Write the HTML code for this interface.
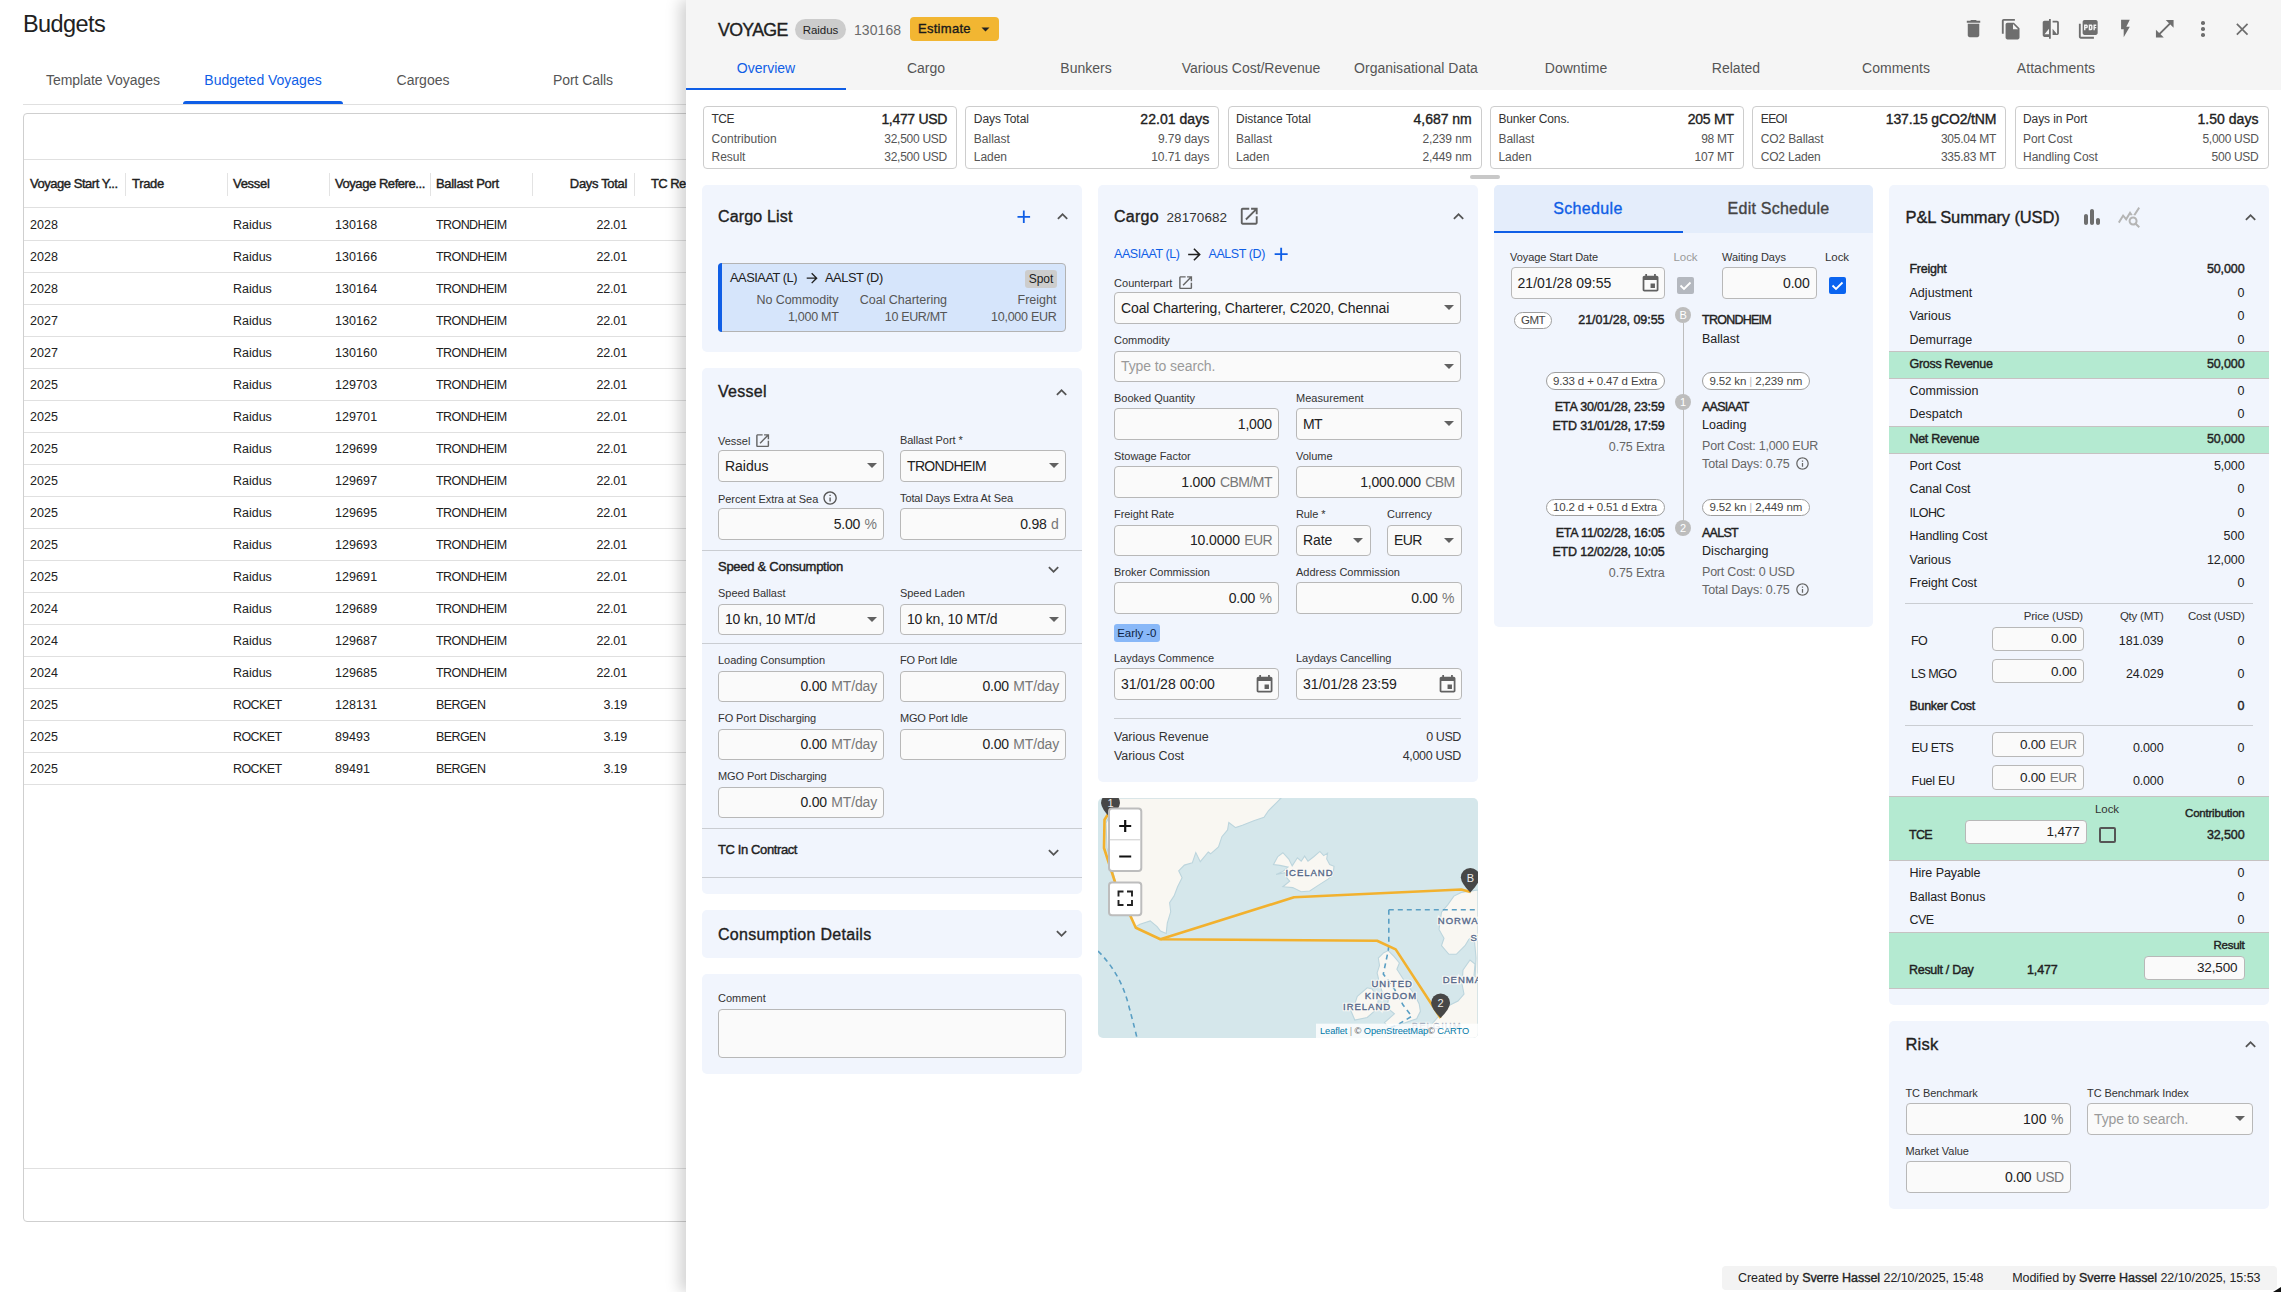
<!DOCTYPE html><html><head><meta charset="utf-8"><style>
*{margin:0;padding:0;box-sizing:border-box}
html,body{width:2281px;height:1292px;overflow:hidden;background:#fff;font-family:"Liberation Sans",sans-serif;position:relative}
.t{position:absolute;white-space:nowrap}
.b{position:absolute}
</style></head><body><div class="t" style="top:7.5px;font-size:23.5px;line-height:33px;color:#212121;letter-spacing:-0.600px;left:23.0px;">Budgets</div>
<div class="t" style="top:70.0px;font-size:14px;line-height:20px;color:#555;letter-spacing:-0.016px;left:-297.0px;width:800px;text-align:center;">Template Voyages</div>
<div class="t" style="top:70.0px;font-size:14px;line-height:20px;color:#0f5ee6;letter-spacing:-0.016px;left:-137.0px;width:800px;text-align:center;">Budgeted Voyages</div>
<div class="t" style="top:70.0px;font-size:14px;line-height:20px;color:#555;letter-spacing:0.004px;left:23.0px;width:800px;text-align:center;">Cargoes</div>
<div class="t" style="top:70.0px;font-size:14px;line-height:20px;color:#555;letter-spacing:-0.092px;left:183.0px;width:800px;text-align:center;">Port Calls</div>
<div class="b" style="left:183.0px;top:101.0px;width:160.0px;height:3.0px;background:#0f5ee6;border-radius:3px 3px 0 0;"></div>
<div class="b" style="left:23.0px;top:104.0px;width:663.0px;height:1.0px;background:#e0e0e0;"></div>
<div class="b" style="left:23.0px;top:113.0px;width:700.0px;height:1109.0px;border:1px solid #cfcfcf;box-sizing:border-box;border-radius:4px;"></div>
<div class="b" style="left:24.0px;top:159.0px;width:662.0px;height:1.0px;background:#e0e0e0;"></div>
<div class="t" style="top:175.0px;font-size:13px;line-height:18px;color:#212121;-webkit-text-stroke:0.4px currentColor;letter-spacing:-0.470px;left:30.0px;">Voyage Start Y...</div>
<div class="t" style="top:175.0px;font-size:13px;line-height:18px;color:#212121;-webkit-text-stroke:0.4px currentColor;letter-spacing:-0.312px;left:132.0px;">Trade</div>
<div class="t" style="top:175.0px;font-size:13px;line-height:18px;color:#212121;-webkit-text-stroke:0.4px currentColor;letter-spacing:-0.293px;left:233.0px;">Vessel</div>
<div class="t" style="top:175.0px;font-size:13px;line-height:18px;color:#212121;-webkit-text-stroke:0.4px currentColor;letter-spacing:-0.439px;left:335.0px;">Voyage Refere...</div>
<div class="t" style="top:175.0px;font-size:13px;line-height:18px;color:#212121;-webkit-text-stroke:0.4px currentColor;letter-spacing:-0.309px;left:436.0px;">Ballast Port</div>
<div class="t" style="top:175.0px;font-size:13px;line-height:18px;color:#212121;-webkit-text-stroke:0.4px currentColor;letter-spacing:-0.332px;right:1654.0px;">Days Total</div>
<div class="t" style="top:175.0px;font-size:13px;line-height:18px;color:#212121;-webkit-text-stroke:0.4px currentColor;letter-spacing:-0.585px;left:651.0px;">TC Re</div>
<div class="b" style="left:125.0px;top:173.0px;width:1.0px;height:23.0px;background:#e3e3e3;"></div>
<div class="b" style="left:227.0px;top:173.0px;width:1.0px;height:23.0px;background:#e3e3e3;"></div>
<div class="b" style="left:329.0px;top:173.0px;width:1.0px;height:23.0px;background:#e3e3e3;"></div>
<div class="b" style="left:430.0px;top:173.0px;width:1.0px;height:23.0px;background:#e3e3e3;"></div>
<div class="b" style="left:532.0px;top:173.0px;width:1.0px;height:23.0px;background:#e3e3e3;"></div>
<div class="b" style="left:634.0px;top:173.0px;width:1.0px;height:23.0px;background:#e3e3e3;"></div>
<div class="b" style="left:24.0px;top:207.0px;width:662.0px;height:1.0px;background:#e0e0e0;"></div>
<div class="t" style="top:216.0px;font-size:12.5px;line-height:18px;color:#212121;letter-spacing:0.075px;left:30.0px;">2028</div>
<div class="t" style="top:216.0px;font-size:12.5px;line-height:18px;color:#212121;letter-spacing:-0.012px;left:233.0px;">Raidus</div>
<div class="t" style="top:216.0px;font-size:12.5px;line-height:18px;color:#212121;letter-spacing:0.075px;left:335.0px;">130168</div>
<div class="t" style="top:216.0px;font-size:12.5px;line-height:18px;color:#212121;letter-spacing:-0.575px;left:436.0px;">TRONDHEIM</div>
<div class="t" style="top:216.0px;font-size:12.5px;line-height:18px;color:#212121;letter-spacing:-0.140px;right:1654.0px;">22.01</div>
<div class="b" style="left:24.0px;top:240.0px;width:662.0px;height:1.0px;background:#e0e0e0;"></div>
<div class="t" style="top:248.0px;font-size:12.5px;line-height:18px;color:#212121;letter-spacing:0.075px;left:30.0px;">2028</div>
<div class="t" style="top:248.0px;font-size:12.5px;line-height:18px;color:#212121;letter-spacing:-0.012px;left:233.0px;">Raidus</div>
<div class="t" style="top:248.0px;font-size:12.5px;line-height:18px;color:#212121;letter-spacing:0.075px;left:335.0px;">130166</div>
<div class="t" style="top:248.0px;font-size:12.5px;line-height:18px;color:#212121;letter-spacing:-0.575px;left:436.0px;">TRONDHEIM</div>
<div class="t" style="top:248.0px;font-size:12.5px;line-height:18px;color:#212121;letter-spacing:-0.140px;right:1654.0px;">22.01</div>
<div class="b" style="left:24.0px;top:272.0px;width:662.0px;height:1.0px;background:#e0e0e0;"></div>
<div class="t" style="top:280.0px;font-size:12.5px;line-height:18px;color:#212121;letter-spacing:0.075px;left:30.0px;">2028</div>
<div class="t" style="top:280.0px;font-size:12.5px;line-height:18px;color:#212121;letter-spacing:-0.012px;left:233.0px;">Raidus</div>
<div class="t" style="top:280.0px;font-size:12.5px;line-height:18px;color:#212121;letter-spacing:0.075px;left:335.0px;">130164</div>
<div class="t" style="top:280.0px;font-size:12.5px;line-height:18px;color:#212121;letter-spacing:-0.575px;left:436.0px;">TRONDHEIM</div>
<div class="t" style="top:280.0px;font-size:12.5px;line-height:18px;color:#212121;letter-spacing:-0.140px;right:1654.0px;">22.01</div>
<div class="b" style="left:24.0px;top:304.0px;width:662.0px;height:1.0px;background:#e0e0e0;"></div>
<div class="t" style="top:312.0px;font-size:12.5px;line-height:18px;color:#212121;letter-spacing:0.075px;left:30.0px;">2027</div>
<div class="t" style="top:312.0px;font-size:12.5px;line-height:18px;color:#212121;letter-spacing:-0.012px;left:233.0px;">Raidus</div>
<div class="t" style="top:312.0px;font-size:12.5px;line-height:18px;color:#212121;letter-spacing:0.075px;left:335.0px;">130162</div>
<div class="t" style="top:312.0px;font-size:12.5px;line-height:18px;color:#212121;letter-spacing:-0.575px;left:436.0px;">TRONDHEIM</div>
<div class="t" style="top:312.0px;font-size:12.5px;line-height:18px;color:#212121;letter-spacing:-0.140px;right:1654.0px;">22.01</div>
<div class="b" style="left:24.0px;top:336.0px;width:662.0px;height:1.0px;background:#e0e0e0;"></div>
<div class="t" style="top:344.0px;font-size:12.5px;line-height:18px;color:#212121;letter-spacing:0.075px;left:30.0px;">2027</div>
<div class="t" style="top:344.0px;font-size:12.5px;line-height:18px;color:#212121;letter-spacing:-0.012px;left:233.0px;">Raidus</div>
<div class="t" style="top:344.0px;font-size:12.5px;line-height:18px;color:#212121;letter-spacing:0.075px;left:335.0px;">130160</div>
<div class="t" style="top:344.0px;font-size:12.5px;line-height:18px;color:#212121;letter-spacing:-0.575px;left:436.0px;">TRONDHEIM</div>
<div class="t" style="top:344.0px;font-size:12.5px;line-height:18px;color:#212121;letter-spacing:-0.140px;right:1654.0px;">22.01</div>
<div class="b" style="left:24.0px;top:368.0px;width:662.0px;height:1.0px;background:#e0e0e0;"></div>
<div class="t" style="top:376.0px;font-size:12.5px;line-height:18px;color:#212121;letter-spacing:0.075px;left:30.0px;">2025</div>
<div class="t" style="top:376.0px;font-size:12.5px;line-height:18px;color:#212121;letter-spacing:-0.012px;left:233.0px;">Raidus</div>
<div class="t" style="top:376.0px;font-size:12.5px;line-height:18px;color:#212121;letter-spacing:0.075px;left:335.0px;">129703</div>
<div class="t" style="top:376.0px;font-size:12.5px;line-height:18px;color:#212121;letter-spacing:-0.575px;left:436.0px;">TRONDHEIM</div>
<div class="t" style="top:376.0px;font-size:12.5px;line-height:18px;color:#212121;letter-spacing:-0.140px;right:1654.0px;">22.01</div>
<div class="b" style="left:24.0px;top:400.0px;width:662.0px;height:1.0px;background:#e0e0e0;"></div>
<div class="t" style="top:408.0px;font-size:12.5px;line-height:18px;color:#212121;letter-spacing:0.075px;left:30.0px;">2025</div>
<div class="t" style="top:408.0px;font-size:12.5px;line-height:18px;color:#212121;letter-spacing:-0.012px;left:233.0px;">Raidus</div>
<div class="t" style="top:408.0px;font-size:12.5px;line-height:18px;color:#212121;letter-spacing:0.075px;left:335.0px;">129701</div>
<div class="t" style="top:408.0px;font-size:12.5px;line-height:18px;color:#212121;letter-spacing:-0.575px;left:436.0px;">TRONDHEIM</div>
<div class="t" style="top:408.0px;font-size:12.5px;line-height:18px;color:#212121;letter-spacing:-0.140px;right:1654.0px;">22.01</div>
<div class="b" style="left:24.0px;top:432.0px;width:662.0px;height:1.0px;background:#e0e0e0;"></div>
<div class="t" style="top:440.0px;font-size:12.5px;line-height:18px;color:#212121;letter-spacing:0.075px;left:30.0px;">2025</div>
<div class="t" style="top:440.0px;font-size:12.5px;line-height:18px;color:#212121;letter-spacing:-0.012px;left:233.0px;">Raidus</div>
<div class="t" style="top:440.0px;font-size:12.5px;line-height:18px;color:#212121;letter-spacing:0.075px;left:335.0px;">129699</div>
<div class="t" style="top:440.0px;font-size:12.5px;line-height:18px;color:#212121;letter-spacing:-0.575px;left:436.0px;">TRONDHEIM</div>
<div class="t" style="top:440.0px;font-size:12.5px;line-height:18px;color:#212121;letter-spacing:-0.140px;right:1654.0px;">22.01</div>
<div class="b" style="left:24.0px;top:464.0px;width:662.0px;height:1.0px;background:#e0e0e0;"></div>
<div class="t" style="top:472.0px;font-size:12.5px;line-height:18px;color:#212121;letter-spacing:0.075px;left:30.0px;">2025</div>
<div class="t" style="top:472.0px;font-size:12.5px;line-height:18px;color:#212121;letter-spacing:-0.012px;left:233.0px;">Raidus</div>
<div class="t" style="top:472.0px;font-size:12.5px;line-height:18px;color:#212121;letter-spacing:0.075px;left:335.0px;">129697</div>
<div class="t" style="top:472.0px;font-size:12.5px;line-height:18px;color:#212121;letter-spacing:-0.575px;left:436.0px;">TRONDHEIM</div>
<div class="t" style="top:472.0px;font-size:12.5px;line-height:18px;color:#212121;letter-spacing:-0.140px;right:1654.0px;">22.01</div>
<div class="b" style="left:24.0px;top:496.0px;width:662.0px;height:1.0px;background:#e0e0e0;"></div>
<div class="t" style="top:504.0px;font-size:12.5px;line-height:18px;color:#212121;letter-spacing:0.075px;left:30.0px;">2025</div>
<div class="t" style="top:504.0px;font-size:12.5px;line-height:18px;color:#212121;letter-spacing:-0.012px;left:233.0px;">Raidus</div>
<div class="t" style="top:504.0px;font-size:12.5px;line-height:18px;color:#212121;letter-spacing:0.075px;left:335.0px;">129695</div>
<div class="t" style="top:504.0px;font-size:12.5px;line-height:18px;color:#212121;letter-spacing:-0.575px;left:436.0px;">TRONDHEIM</div>
<div class="t" style="top:504.0px;font-size:12.5px;line-height:18px;color:#212121;letter-spacing:-0.140px;right:1654.0px;">22.01</div>
<div class="b" style="left:24.0px;top:528.0px;width:662.0px;height:1.0px;background:#e0e0e0;"></div>
<div class="t" style="top:536.0px;font-size:12.5px;line-height:18px;color:#212121;letter-spacing:0.075px;left:30.0px;">2025</div>
<div class="t" style="top:536.0px;font-size:12.5px;line-height:18px;color:#212121;letter-spacing:-0.012px;left:233.0px;">Raidus</div>
<div class="t" style="top:536.0px;font-size:12.5px;line-height:18px;color:#212121;letter-spacing:0.075px;left:335.0px;">129693</div>
<div class="t" style="top:536.0px;font-size:12.5px;line-height:18px;color:#212121;letter-spacing:-0.575px;left:436.0px;">TRONDHEIM</div>
<div class="t" style="top:536.0px;font-size:12.5px;line-height:18px;color:#212121;letter-spacing:-0.140px;right:1654.0px;">22.01</div>
<div class="b" style="left:24.0px;top:560.0px;width:662.0px;height:1.0px;background:#e0e0e0;"></div>
<div class="t" style="top:568.0px;font-size:12.5px;line-height:18px;color:#212121;letter-spacing:0.075px;left:30.0px;">2025</div>
<div class="t" style="top:568.0px;font-size:12.5px;line-height:18px;color:#212121;letter-spacing:-0.012px;left:233.0px;">Raidus</div>
<div class="t" style="top:568.0px;font-size:12.5px;line-height:18px;color:#212121;letter-spacing:0.075px;left:335.0px;">129691</div>
<div class="t" style="top:568.0px;font-size:12.5px;line-height:18px;color:#212121;letter-spacing:-0.575px;left:436.0px;">TRONDHEIM</div>
<div class="t" style="top:568.0px;font-size:12.5px;line-height:18px;color:#212121;letter-spacing:-0.140px;right:1654.0px;">22.01</div>
<div class="b" style="left:24.0px;top:592.0px;width:662.0px;height:1.0px;background:#e0e0e0;"></div>
<div class="t" style="top:600.0px;font-size:12.5px;line-height:18px;color:#212121;letter-spacing:0.075px;left:30.0px;">2024</div>
<div class="t" style="top:600.0px;font-size:12.5px;line-height:18px;color:#212121;letter-spacing:-0.012px;left:233.0px;">Raidus</div>
<div class="t" style="top:600.0px;font-size:12.5px;line-height:18px;color:#212121;letter-spacing:0.075px;left:335.0px;">129689</div>
<div class="t" style="top:600.0px;font-size:12.5px;line-height:18px;color:#212121;letter-spacing:-0.575px;left:436.0px;">TRONDHEIM</div>
<div class="t" style="top:600.0px;font-size:12.5px;line-height:18px;color:#212121;letter-spacing:-0.140px;right:1654.0px;">22.01</div>
<div class="b" style="left:24.0px;top:624.0px;width:662.0px;height:1.0px;background:#e0e0e0;"></div>
<div class="t" style="top:632.0px;font-size:12.5px;line-height:18px;color:#212121;letter-spacing:0.075px;left:30.0px;">2024</div>
<div class="t" style="top:632.0px;font-size:12.5px;line-height:18px;color:#212121;letter-spacing:-0.012px;left:233.0px;">Raidus</div>
<div class="t" style="top:632.0px;font-size:12.5px;line-height:18px;color:#212121;letter-spacing:0.075px;left:335.0px;">129687</div>
<div class="t" style="top:632.0px;font-size:12.5px;line-height:18px;color:#212121;letter-spacing:-0.575px;left:436.0px;">TRONDHEIM</div>
<div class="t" style="top:632.0px;font-size:12.5px;line-height:18px;color:#212121;letter-spacing:-0.140px;right:1654.0px;">22.01</div>
<div class="b" style="left:24.0px;top:656.0px;width:662.0px;height:1.0px;background:#e0e0e0;"></div>
<div class="t" style="top:664.0px;font-size:12.5px;line-height:18px;color:#212121;letter-spacing:0.075px;left:30.0px;">2024</div>
<div class="t" style="top:664.0px;font-size:12.5px;line-height:18px;color:#212121;letter-spacing:-0.012px;left:233.0px;">Raidus</div>
<div class="t" style="top:664.0px;font-size:12.5px;line-height:18px;color:#212121;letter-spacing:0.075px;left:335.0px;">129685</div>
<div class="t" style="top:664.0px;font-size:12.5px;line-height:18px;color:#212121;letter-spacing:-0.575px;left:436.0px;">TRONDHEIM</div>
<div class="t" style="top:664.0px;font-size:12.5px;line-height:18px;color:#212121;letter-spacing:-0.140px;right:1654.0px;">22.01</div>
<div class="b" style="left:24.0px;top:688.0px;width:662.0px;height:1.0px;background:#e0e0e0;"></div>
<div class="t" style="top:696.0px;font-size:12.5px;line-height:18px;color:#212121;letter-spacing:0.075px;left:30.0px;">2025</div>
<div class="t" style="top:696.0px;font-size:12.5px;line-height:18px;color:#212121;letter-spacing:-0.575px;left:233.0px;">ROCKET</div>
<div class="t" style="top:696.0px;font-size:12.5px;line-height:18px;color:#212121;letter-spacing:0.075px;left:335.0px;">128131</div>
<div class="t" style="top:696.0px;font-size:12.5px;line-height:18px;color:#212121;letter-spacing:-0.575px;left:436.0px;">BERGEN</div>
<div class="t" style="top:696.0px;font-size:12.5px;line-height:18px;color:#212121;letter-spacing:-0.194px;right:1654.0px;">3.19</div>
<div class="b" style="left:24.0px;top:720.0px;width:662.0px;height:1.0px;background:#e0e0e0;"></div>
<div class="t" style="top:728.0px;font-size:12.5px;line-height:18px;color:#212121;letter-spacing:0.075px;left:30.0px;">2025</div>
<div class="t" style="top:728.0px;font-size:12.5px;line-height:18px;color:#212121;letter-spacing:-0.575px;left:233.0px;">ROCKET</div>
<div class="t" style="top:728.0px;font-size:12.5px;line-height:18px;color:#212121;letter-spacing:0.075px;left:335.0px;">89493</div>
<div class="t" style="top:728.0px;font-size:12.5px;line-height:18px;color:#212121;letter-spacing:-0.575px;left:436.0px;">BERGEN</div>
<div class="t" style="top:728.0px;font-size:12.5px;line-height:18px;color:#212121;letter-spacing:-0.194px;right:1654.0px;">3.19</div>
<div class="b" style="left:24.0px;top:752.0px;width:662.0px;height:1.0px;background:#e0e0e0;"></div>
<div class="t" style="top:760.0px;font-size:12.5px;line-height:18px;color:#212121;letter-spacing:0.075px;left:30.0px;">2025</div>
<div class="t" style="top:760.0px;font-size:12.5px;line-height:18px;color:#212121;letter-spacing:-0.575px;left:233.0px;">ROCKET</div>
<div class="t" style="top:760.0px;font-size:12.5px;line-height:18px;color:#212121;letter-spacing:0.075px;left:335.0px;">89491</div>
<div class="t" style="top:760.0px;font-size:12.5px;line-height:18px;color:#212121;letter-spacing:-0.575px;left:436.0px;">BERGEN</div>
<div class="t" style="top:760.0px;font-size:12.5px;line-height:18px;color:#212121;letter-spacing:-0.194px;right:1654.0px;">3.19</div>
<div class="b" style="left:24.0px;top:784.0px;width:662.0px;height:1.0px;background:#e0e0e0;"></div>
<div class="b" style="left:24.0px;top:1168.0px;width:662.0px;height:1.0px;background:#e0e0e0;"></div>
<div class="b" style="left:686.0px;top:0.0px;width:1595.0px;height:1292.0px;background:#fff;box-shadow:-6px 0 14px rgba(0,0,0,0.18);"></div>
<div class="b" style="left:686.0px;top:0.0px;width:1595.0px;height:90.0px;background:#f5f5f5;"></div>
<div class="t" style="top:18.3px;font-size:17.8px;line-height:25px;color:#212121;-webkit-text-stroke:0.35px currentColor;letter-spacing:-0.700px;left:718.0px;">VOYAGE</div>
<div class="b" style="left:795.0px;top:19.0px;width:51.0px;height:21.0px;background:#cccccc;border-radius:11px;"></div>
<div class="t" style="top:21.5px;font-size:11.5px;line-height:16px;color:#222;letter-spacing:-0.011px;left:420.5px;width:800px;text-align:center;">Raidus</div>
<div class="t" style="top:19.5px;font-size:14px;line-height:20px;color:#6b6b6b;letter-spacing:0.084px;left:854.0px;">130168</div>
<div class="b" style="left:910.0px;top:17.0px;width:89.0px;height:24.0px;background:#f2b632;border-radius:4px;"></div>
<div class="t" style="top:20.0px;font-size:13px;line-height:18px;color:#1a1a1a;-webkit-text-stroke:0.35px currentColor;letter-spacing:0.276px;left:918.0px;">Estimate</div>
<svg class="b" style="left:981.0px;top:27.0px;" width="9" height="5" viewBox="0 0 9 5"><path d="M0.5 0.5H8.5L4.5 4.5Z" fill="#222"/></svg>
<svg class="b" style="left:1961.9px;top:17.3px;" width="23.04" height="23.04" viewBox="0 0 24 24"><path d="M6 19c0 1.1.9 2 2 2h8c1.1 0 2-.9 2-2V7H6v12zM19 4h-3.5l-1-1h-5l-1 1H5v2h14V4z" fill="#6e6e6e"/></svg>
<svg class="b" style="left:2000.1px;top:18.0px;" width="22.32" height="22.32" viewBox="0 0 24 24"><path d="M16 1H4c-1.1 0-2 .9-2 2v14h2V3h12V1zm-1 4l6 6v10c0 1.1-.9 2-2 2H7.99C6.89 23 6 22.1 6 21l.01-14c0-1.1.89-2 1.99-2h7zm-1 7h5.5L14 6.5V12z" fill="#6e6e6e"/></svg>
<svg class="b" style="left:2039.5px;top:18.1px;" width="21.6" height="21.6" viewBox="0 0 24 24"><path d="M10 3H5c-1.11 0-2 .89-2 2v14c0 1.1.89 2 2 2h5v2h2V1h-2v2zm0 15H5l5-6v6zm9-15h-5v2h5v13l-5-6v7h5c1.1 0 2-.9 2-2V5c0-1.1-.9-2-2-2z" fill="#6e6e6e"/></svg>
<svg class="b" style="left:2076.9px;top:17.8px;" width="22.56" height="22.56" viewBox="0 0 24 24"><path d="M20 2H8c-1.1 0-2 .9-2 2v12c0 1.1.9 2 2 2h12c1.1 0 2-.9 2-2V4c0-1.1-.9-2-2-2zm-8.5 7.5c0 .83-.67 1.5-1.5 1.5H9v2H7.5V7H10c.83 0 1.5.67 1.5 1.5v1zm5 2c0 .83-.67 1.5-1.5 1.5h-2.5V7H15c.83 0 1.5.67 1.5 1.5v3zm4-3H19v1h1.5V11H19v2h-1.5V7h3v1.5zM9 9.5h1v-1H9v1zM4 6H2v14c0 1.1.9 2 2 2h14v-2H4V6zm10 5.5h1v-3h-1v3z" fill="#6e6e6e"/></svg>
<svg class="b" style="left:2115.2px;top:17.9px;" width="20.88" height="20.88" viewBox="0 0 24 24"><path d="M7 2v11h3v9l7-12h-4l4-8z" fill="#6e6e6e"/></svg>
<svg class="b" style="left:2153.2px;top:17.4px;" width="23.52" height="23.52" viewBox="0 0 24 24"><path d="M21 11V3h-8l3.29 3.29-10 10L3 13v8h8l-3.29-3.29 10-10z" fill="#6e6e6e"/></svg>
<div class="b" style="left:2201.4px;top:21.4px;width:3.6px;height:3.6px;background:#6e6e6e;border-radius:1.8px;"></div>
<div class="b" style="left:2201.4px;top:27.3px;width:3.6px;height:3.6px;background:#6e6e6e;border-radius:1.8px;"></div>
<div class="b" style="left:2201.4px;top:33.2px;width:3.6px;height:3.6px;background:#6e6e6e;border-radius:1.8px;"></div>
<svg class="b" style="left:2232.0px;top:18.9px;" width="20.4" height="20.4" viewBox="0 0 24 24"><path d="M19 6.41L17.59 5 12 10.59 6.41 5 5 6.41 10.59 12 5 17.59 6.41 19 12 13.41 17.59 19 19 17.59 13.41 12z" fill="#6e6e6e"/></svg>
<div class="t" style="top:58.0px;font-size:14px;line-height:20px;color:#0f5ee6;letter-spacing:0.018px;left:366.0px;width:800px;text-align:center;">Overview</div>
<div class="t" style="top:58.0px;font-size:14px;line-height:20px;color:#555;letter-spacing:-0.039px;left:526.0px;width:800px;text-align:center;">Cargo</div>
<div class="t" style="top:58.0px;font-size:14px;line-height:20px;color:#555;letter-spacing:0.004px;left:686.0px;width:800px;text-align:center;">Bunkers</div>
<div class="t" style="top:58.0px;font-size:14px;line-height:20px;color:#555;letter-spacing:-0.034px;left:851.0px;width:800px;text-align:center;">Various Cost/Revenue</div>
<div class="t" style="top:58.0px;font-size:14px;line-height:20px;color:#555;letter-spacing:0.004px;left:1016.0px;width:800px;text-align:center;">Organisational Data</div>
<div class="t" style="top:58.0px;font-size:14px;line-height:20px;color:#555;letter-spacing:0.018px;left:1176.0px;width:800px;text-align:center;">Downtime</div>
<div class="t" style="top:58.0px;font-size:14px;line-height:20px;color:#555;letter-spacing:0.004px;left:1336.0px;width:800px;text-align:center;">Related</div>
<div class="t" style="top:58.0px;font-size:14px;line-height:20px;color:#555;letter-spacing:0.018px;left:1496.0px;width:800px;text-align:center;">Comments</div>
<div class="t" style="top:58.0px;font-size:14px;line-height:20px;color:#555;letter-spacing:0.043px;left:1656.0px;width:800px;text-align:center;">Attachments</div>
<div class="b" style="left:686.0px;top:88.0px;width:160.0px;height:2.0px;background:#0f5ee6;"></div>
<div class="b" style="left:703.0px;top:106.0px;width:254.0px;height:63.0px;background:#fff;border:1px solid #cdcdcd;box-sizing:border-box;border-radius:4px;"></div>
<div class="t" style="top:110.5px;font-size:12px;line-height:17px;color:#333;letter-spacing:-0.552px;left:711.5px;">TCE</div>
<div class="t" style="top:109.0px;font-size:14px;line-height:20px;color:#212121;-webkit-text-stroke:0.35px currentColor;letter-spacing:-0.320px;right:1334.0px;">1,477 USD</div>
<div class="t" style="top:130.5px;font-size:12px;line-height:17px;color:#555;letter-spacing:0.042px;left:711.5px;">Contribution</div>
<div class="t" style="top:130.5px;font-size:12px;line-height:17px;color:#555;letter-spacing:-0.262px;right:1334.0px;">32,500 USD</div>
<div class="t" style="top:148.5px;font-size:12px;line-height:17px;color:#555;letter-spacing:-0.012px;left:711.5px;">Result</div>
<div class="t" style="top:148.5px;font-size:12px;line-height:17px;color:#555;letter-spacing:-0.262px;right:1334.0px;">32,500 USD</div>
<div class="b" style="left:965.3px;top:106.0px;width:254.0px;height:63.0px;background:#fff;border:1px solid #cdcdcd;box-sizing:border-box;border-radius:4px;"></div>
<div class="t" style="top:110.5px;font-size:12px;line-height:17px;color:#333;letter-spacing:-0.079px;left:973.8px;">Days Total</div>
<div class="t" style="top:109.0px;font-size:14px;line-height:20px;color:#212121;-webkit-text-stroke:0.35px currentColor;letter-spacing:0.048px;right:1071.7px;">22.01 days</div>
<div class="t" style="top:130.5px;font-size:12px;line-height:17px;color:#555;letter-spacing:0.003px;left:973.8px;">Ballast</div>
<div class="t" style="top:130.5px;font-size:12px;line-height:17px;color:#555;letter-spacing:-0.080px;right:1071.7px;">9.79 days</div>
<div class="t" style="top:148.5px;font-size:12px;line-height:17px;color:#555;letter-spacing:-0.034px;left:973.8px;">Laden</div>
<div class="t" style="top:148.5px;font-size:12px;line-height:17px;color:#555;letter-spacing:-0.065px;right:1071.7px;">10.71 days</div>
<div class="b" style="left:1227.6px;top:106.0px;width:254.0px;height:63.0px;background:#fff;border:1px solid #cdcdcd;box-sizing:border-box;border-radius:4px;"></div>
<div class="t" style="top:110.5px;font-size:12px;line-height:17px;color:#333;letter-spacing:-0.029px;left:1236.1px;">Distance Total</div>
<div class="t" style="top:109.0px;font-size:14px;line-height:20px;color:#212121;-webkit-text-stroke:0.35px currentColor;letter-spacing:-0.045px;right:809.4px;">4,687 nm</div>
<div class="t" style="top:130.5px;font-size:12px;line-height:17px;color:#555;letter-spacing:0.003px;left:1236.1px;">Ballast</div>
<div class="t" style="top:130.5px;font-size:12px;line-height:17px;color:#555;letter-spacing:-0.105px;right:809.4px;">2,239 nm</div>
<div class="t" style="top:148.5px;font-size:12px;line-height:17px;color:#555;letter-spacing:-0.034px;left:1236.1px;">Laden</div>
<div class="t" style="top:148.5px;font-size:12px;line-height:17px;color:#555;letter-spacing:-0.105px;right:809.4px;">2,449 nm</div>
<div class="b" style="left:1489.9px;top:106.0px;width:254.0px;height:63.0px;background:#fff;border:1px solid #cdcdcd;box-sizing:border-box;border-radius:4px;"></div>
<div class="t" style="top:110.5px;font-size:12px;line-height:17px;color:#333;letter-spacing:-0.138px;left:1498.4px;">Bunker Cons.</div>
<div class="t" style="top:109.0px;font-size:14px;line-height:20px;color:#212121;-webkit-text-stroke:0.35px currentColor;letter-spacing:-0.215px;right:547.1px;">205 MT</div>
<div class="t" style="top:130.5px;font-size:12px;line-height:17px;color:#555;letter-spacing:0.003px;left:1498.4px;">Ballast</div>
<div class="t" style="top:130.5px;font-size:12px;line-height:17px;color:#555;letter-spacing:-0.264px;right:547.1px;">98 MT</div>
<div class="t" style="top:148.5px;font-size:12px;line-height:17px;color:#555;letter-spacing:-0.034px;left:1498.4px;">Laden</div>
<div class="t" style="top:148.5px;font-size:12px;line-height:17px;color:#555;letter-spacing:-0.208px;right:547.1px;">107 MT</div>
<div class="b" style="left:1752.2px;top:106.0px;width:254.0px;height:63.0px;background:#fff;border:1px solid #cdcdcd;box-sizing:border-box;border-radius:4px;"></div>
<div class="t" style="top:110.5px;font-size:12px;line-height:17px;color:#333;letter-spacing:-0.552px;left:1760.7px;">EEOI</div>
<div class="t" style="top:109.0px;font-size:14px;line-height:20px;color:#212121;-webkit-text-stroke:0.35px currentColor;letter-spacing:-0.162px;right:284.8px;">137.15 gCO2/tNM</div>
<div class="t" style="top:130.5px;font-size:12px;line-height:17px;color:#555;letter-spacing:-0.124px;left:1760.7px;">CO2 Ballast</div>
<div class="t" style="top:130.5px;font-size:12px;line-height:17px;color:#555;letter-spacing:-0.229px;right:284.8px;">305.04 MT</div>
<div class="t" style="top:148.5px;font-size:12px;line-height:17px;color:#555;letter-spacing:-0.173px;left:1760.7px;">CO2 Laden</div>
<div class="t" style="top:148.5px;font-size:12px;line-height:17px;color:#555;letter-spacing:-0.229px;right:284.8px;">335.83 MT</div>
<div class="b" style="left:2014.5px;top:106.0px;width:254.0px;height:63.0px;background:#fff;border:1px solid #cdcdcd;box-sizing:border-box;border-radius:4px;"></div>
<div class="t" style="top:110.5px;font-size:12px;line-height:17px;color:#333;letter-spacing:-0.088px;left:2023.0px;">Days in Port</div>
<div class="t" style="top:109.0px;font-size:14px;line-height:20px;color:#212121;-webkit-text-stroke:0.35px currentColor;letter-spacing:0.044px;right:22.5px;">1.50 days</div>
<div class="t" style="top:130.5px;font-size:12px;line-height:17px;color:#555;letter-spacing:-0.099px;left:2023.0px;">Port Cost</div>
<div class="t" style="top:130.5px;font-size:12px;line-height:17px;color:#555;letter-spacing:-0.299px;right:22.5px;">5,000 USD</div>
<div class="t" style="top:148.5px;font-size:12px;line-height:17px;color:#555;letter-spacing:-0.039px;left:2023.0px;">Handling Cost</div>
<div class="t" style="top:148.5px;font-size:12px;line-height:17px;color:#555;letter-spacing:-0.257px;right:22.5px;">500 USD</div>
<div class="b" style="left:1470.0px;top:175.2px;width:30.0px;height:3.5px;background:#c8c8c8;border-radius:2px;"></div>
<div class="b" style="left:702.0px;top:185.0px;width:380.0px;height:167.0px;background:#f1f5fd;border-radius:5px;"></div>
<div class="t" style="top:205.5px;font-size:16px;line-height:22px;color:#212121;-webkit-text-stroke:0.35px currentColor;letter-spacing:0.160px;left:718.0px;">Cargo List</div>
<svg class="b" style="left:1013.3px;top:205.5px;" width="21.6" height="21.6" viewBox="0 0 24 24"><path d="M19 13h-6v6h-2v-6H5v-2h6V5h2v6h6v2z" fill="#0f5ee6"/></svg>
<svg class="b" style="left:1051.7px;top:205.7px;" width="21.12" height="21.12" viewBox="0 0 24 24"><path d="M12 8l-6 6 1.41 1.41L12 10.83l4.59 4.58L18 14z" fill="#555"/></svg>
<div class="b" style="left:718.0px;top:263.0px;width:348.0px;height:68.5px;background:#d6e5fb;border:1px solid #b3b3b3;box-sizing:border-box;border-radius:4px;"></div>
<div class="b" style="left:718.0px;top:263.0px;width:4.0px;height:68.5px;background:#0f5ee6;border-radius:4px 0 0 4px;"></div>
<div class="t" style="top:269.0px;font-size:12.8px;line-height:18px;color:#212121;letter-spacing:-0.463px;left:730.0px;">AASIAAT (L)</div>
<svg class="b" style="left:803.8px;top:269.8px;" width="16.32" height="16.32" viewBox="0 0 24 24"><path d="M12 4l-1.41 1.41L16.17 11H4v2h12.17l-5.58 5.59L12 20l8-8z" fill="#212121"/></svg>
<div class="t" style="top:269.0px;font-size:12.8px;line-height:18px;color:#212121;letter-spacing:-0.435px;left:825.0px;">AALST (D)</div>
<div class="b" style="left:1025.0px;top:270.0px;width:32.0px;height:18.0px;background:#cdcdcd;border-radius:3px;"></div>
<div class="t" style="top:270.5px;font-size:12px;line-height:17px;color:#212121;letter-spacing:-0.066px;left:641.0px;width:800px;text-align:center;">Spot</div>
<div class="t" style="top:290.5px;font-size:12.5px;line-height:18px;color:#555;letter-spacing:-0.052px;right:1442.5px;">No Commodity</div>
<div class="t" style="top:307.5px;font-size:12.5px;line-height:18px;color:#555;letter-spacing:-0.278px;right:1442.5px;">1,000 MT</div>
<div class="t" style="top:290.5px;font-size:12.5px;line-height:18px;color:#555;letter-spacing:-0.022px;right:1334.0px;">Coal Chartering</div>
<div class="t" style="top:307.5px;font-size:12.5px;line-height:18px;color:#555;letter-spacing:-0.344px;right:1334.0px;">10 EUR/MT</div>
<div class="t" style="top:290.5px;font-size:12.5px;line-height:18px;color:#555;letter-spacing:0.004px;right:1224.5px;">Freight</div>
<div class="t" style="top:307.5px;font-size:12.5px;line-height:18px;color:#555;letter-spacing:-0.272px;right:1224.5px;">10,000 EUR</div>
<div class="b" style="left:702.0px;top:368.0px;width:380.0px;height:526.0px;background:#f1f5fd;border-radius:5px;"></div>
<div class="t" style="top:381.0px;font-size:16px;line-height:22px;color:#212121;-webkit-text-stroke:0.35px currentColor;letter-spacing:0.293px;left:718.0px;">Vessel</div>
<svg class="b" style="left:1051.4px;top:381.7px;" width="21.12" height="21.12" viewBox="0 0 24 24"><path d="M12 8l-6 6 1.41 1.41L12 10.83l4.59 4.58L18 14z" fill="#555"/></svg>
<div class="t" style="top:433.5px;font-size:11px;line-height:15px;color:#333;letter-spacing:-0.011px;left:718.0px;">Vessel</div>
<svg class="b" style="left:753.8px;top:432.2px;" width="17.28" height="17.28" viewBox="0 0 24 24"><path d="M19 19H5V5h7V3H5c-1.11 0-2 .9-2 2v14c0 1.1.89 2 2 2h14c1.1 0 2-.9 2-2v-7h-2v7zM14 3v2h3.59l-9.83 9.83 1.41 1.41L19 6.41V10h2V3h-7z" fill="#666"/></svg>
<div class="b" style="left:718.0px;top:450.0px;width:166.0px;height:31.5px;background:#fafafa;border:1px solid #b8b8b8;box-sizing:border-box;border-radius:4px;"></div>
<div class="t" style="top:455.8px;font-size:14px;line-height:20px;color:#212121;letter-spacing:-0.014px;left:725.0px;">Raidus</div>
<svg class="b" style="left:866.5px;top:463.2px;" width="10" height="5" viewBox="0 0 10 5"><path d="M0 0H10L5 5Z" fill="#616161"/></svg>
<div class="t" style="top:432.5px;font-size:11px;line-height:15px;color:#333;letter-spacing:-0.063px;left:900.0px;">Ballast Port *</div>
<div class="b" style="left:900.0px;top:450.0px;width:166.0px;height:31.5px;background:#fafafa;border:1px solid #b8b8b8;box-sizing:border-box;border-radius:4px;"></div>
<div class="t" style="top:455.8px;font-size:14px;line-height:20px;color:#212121;letter-spacing:-0.644px;left:907.0px;">TRONDHEIM</div>
<svg class="b" style="left:1048.5px;top:463.2px;" width="10" height="5" viewBox="0 0 10 5"><path d="M0 0H10L5 5Z" fill="#616161"/></svg>
<div class="t" style="top:491.5px;font-size:11px;line-height:15px;color:#333;letter-spacing:-0.064px;left:718.0px;">Percent Extra at Sea</div>
<svg class="b" style="left:821.6px;top:490.4px;" width="16.2" height="16.2" viewBox="0 0 24 24"><path d="M11 7h2v2h-2zm0 4h2v6h-2zm1-9C6.48 2 2 6.48 2 12s4.48 10 10 10 10-4.48 10-10S17.52 2 12 2zm0 18c-4.41 0-8-3.59-8-8s3.59-8 8-8 8 3.59 8 8-3.59 8-8 8z" fill="#555"/></svg>
<div class="b" style="left:718.0px;top:508.0px;width:166.0px;height:31.5px;background:#fafafa;border:1px solid #b8b8b8;box-sizing:border-box;border-radius:4px;"></div>
<div class="t" style="top:513.8px;font-size:14px;line-height:20px;color:#777;letter-spacing:0.000px;right:1404.0px;">%</div>
<div class="t" style="top:513.8px;font-size:14px;line-height:20px;color:#212121;letter-spacing:-0.217px;right:1420.9px;">5.00</div>
<div class="t" style="top:490.5px;font-size:11px;line-height:15px;color:#333;letter-spacing:-0.114px;left:900.0px;">Total Days Extra At Sea</div>
<div class="b" style="left:900.0px;top:508.0px;width:166.0px;height:31.5px;background:#fafafa;border:1px solid #b8b8b8;box-sizing:border-box;border-radius:4px;"></div>
<div class="t" style="top:513.8px;font-size:14px;line-height:20px;color:#777;letter-spacing:0.112px;right:1222.0px;">d</div>
<div class="t" style="top:513.8px;font-size:14px;line-height:20px;color:#212121;letter-spacing:-0.217px;right:1234.4px;">0.98</div>
<div class="b" style="left:702.0px;top:550.0px;width:380.0px;height:1.0px;background:#cacdd2;"></div>
<div class="t" style="top:557.5px;font-size:13px;line-height:18px;color:#212121;-webkit-text-stroke:0.4px currentColor;letter-spacing:-0.267px;left:718.0px;">Speed &amp; Consumption</div>
<svg class="b" style="left:1043.4px;top:559.2px;" width="21.12" height="21.12" viewBox="0 0 24 24"><path d="M16.59 8.59L12 13.17 7.41 8.59 6 10l6 6 6-6z" fill="#555"/></svg>
<div class="t" style="top:585.5px;font-size:11px;line-height:15px;color:#333;letter-spacing:-0.036px;left:718.0px;">Speed Ballast</div>
<div class="b" style="left:718.0px;top:603.5px;width:166.0px;height:31.0px;background:#fafafa;border:1px solid #b8b8b8;box-sizing:border-box;border-radius:4px;"></div>
<div class="t" style="top:609.0px;font-size:14px;line-height:20px;color:#212121;letter-spacing:-0.214px;left:725.0px;">10 kn, 10 MT/d</div>
<svg class="b" style="left:866.5px;top:616.5px;" width="10" height="5" viewBox="0 0 10 5"><path d="M0 0H10L5 5Z" fill="#616161"/></svg>
<div class="t" style="top:585.5px;font-size:11px;line-height:15px;color:#333;letter-spacing:-0.058px;left:900.0px;">Speed Laden</div>
<div class="b" style="left:900.0px;top:603.5px;width:166.0px;height:31.0px;background:#fafafa;border:1px solid #b8b8b8;box-sizing:border-box;border-radius:4px;"></div>
<div class="t" style="top:609.0px;font-size:14px;line-height:20px;color:#212121;letter-spacing:-0.214px;left:907.0px;">10 kn, 10 MT/d</div>
<svg class="b" style="left:1048.5px;top:616.5px;" width="10" height="5" viewBox="0 0 10 5"><path d="M0 0H10L5 5Z" fill="#616161"/></svg>
<div class="b" style="left:702.0px;top:643.0px;width:380.0px;height:1.0px;background:#cacdd2;"></div>
<div class="t" style="top:652.5px;font-size:11px;line-height:15px;color:#333;letter-spacing:0.003px;left:718.0px;">Loading Consumption</div>
<div class="b" style="left:718.0px;top:670.5px;width:166.0px;height:31.0px;background:#fafafa;border:1px solid #b8b8b8;box-sizing:border-box;border-radius:4px;"></div>
<div class="t" style="top:676.0px;font-size:14px;line-height:20px;color:#777;letter-spacing:-0.159px;right:1404.0px;">MT/day</div>
<div class="t" style="top:676.0px;font-size:14px;line-height:20px;color:#212121;letter-spacing:-0.217px;right:1454.2px;">0.00</div>
<div class="t" style="top:652.5px;font-size:11px;line-height:15px;color:#333;letter-spacing:-0.180px;left:900.0px;">FO Port Idle</div>
<div class="b" style="left:900.0px;top:670.5px;width:166.0px;height:31.0px;background:#fafafa;border:1px solid #b8b8b8;box-sizing:border-box;border-radius:4px;"></div>
<div class="t" style="top:676.0px;font-size:14px;line-height:20px;color:#777;letter-spacing:-0.159px;right:1222.0px;">MT/day</div>
<div class="t" style="top:676.0px;font-size:14px;line-height:20px;color:#212121;letter-spacing:-0.217px;right:1272.2px;">0.00</div>
<div class="t" style="top:710.5px;font-size:11px;line-height:15px;color:#333;letter-spacing:-0.081px;left:718.0px;">FO Port Discharging</div>
<div class="b" style="left:718.0px;top:728.5px;width:166.0px;height:31.0px;background:#fafafa;border:1px solid #b8b8b8;box-sizing:border-box;border-radius:4px;"></div>
<div class="t" style="top:734.0px;font-size:14px;line-height:20px;color:#777;letter-spacing:-0.159px;right:1404.0px;">MT/day</div>
<div class="t" style="top:734.0px;font-size:14px;line-height:20px;color:#212121;letter-spacing:-0.217px;right:1454.2px;">0.00</div>
<div class="t" style="top:710.5px;font-size:11px;line-height:15px;color:#333;letter-spacing:-0.205px;left:900.0px;">MGO Port Idle</div>
<div class="b" style="left:900.0px;top:728.5px;width:166.0px;height:31.0px;background:#fafafa;border:1px solid #b8b8b8;box-sizing:border-box;border-radius:4px;"></div>
<div class="t" style="top:734.0px;font-size:14px;line-height:20px;color:#777;letter-spacing:-0.159px;right:1222.0px;">MT/day</div>
<div class="t" style="top:734.0px;font-size:14px;line-height:20px;color:#212121;letter-spacing:-0.217px;right:1272.2px;">0.00</div>
<div class="t" style="top:768.5px;font-size:11px;line-height:15px;color:#333;letter-spacing:-0.102px;left:718.0px;">MGO Port Discharging</div>
<div class="b" style="left:718.0px;top:786.5px;width:166.0px;height:31.0px;background:#fafafa;border:1px solid #b8b8b8;box-sizing:border-box;border-radius:4px;"></div>
<div class="t" style="top:792.0px;font-size:14px;line-height:20px;color:#777;letter-spacing:-0.159px;right:1404.0px;">MT/day</div>
<div class="t" style="top:792.0px;font-size:14px;line-height:20px;color:#212121;letter-spacing:-0.217px;right:1454.2px;">0.00</div>
<div class="b" style="left:702.0px;top:828.0px;width:380.0px;height:1.0px;background:#cacdd2;"></div>
<div class="t" style="top:841.0px;font-size:13px;line-height:18px;color:#212121;-webkit-text-stroke:0.4px currentColor;letter-spacing:-0.390px;left:718.0px;">TC In Contract</div>
<svg class="b" style="left:1043.4px;top:842.2px;" width="21.12" height="21.12" viewBox="0 0 24 24"><path d="M16.59 8.59L12 13.17 7.41 8.59 6 10l6 6 6-6z" fill="#555"/></svg>
<div class="b" style="left:702.0px;top:877.0px;width:380.0px;height:1.0px;background:#cacdd2;"></div>
<div class="b" style="left:702.0px;top:910.0px;width:380.0px;height:48.0px;background:#f1f5fd;border-radius:5px;"></div>
<div class="t" style="top:923.5px;font-size:16px;line-height:22px;color:#212121;-webkit-text-stroke:0.35px currentColor;letter-spacing:0.312px;left:718.0px;">Consumption Details</div>
<svg class="b" style="left:1051.4px;top:923.2px;" width="21.12" height="21.12" viewBox="0 0 24 24"><path d="M16.59 8.59L12 13.17 7.41 8.59 6 10l6 6 6-6z" fill="#555"/></svg>
<div class="b" style="left:702.0px;top:974.0px;width:380.0px;height:100.0px;background:#f1f5fd;border-radius:5px;"></div>
<div class="t" style="top:990.5px;font-size:11px;line-height:15px;color:#333;letter-spacing:0.003px;left:718.0px;">Comment</div>
<div class="b" style="left:718.0px;top:1008.5px;width:348.0px;height:49.0px;background:#fafafa;border:1px solid #b8b8b8;box-sizing:border-box;border-radius:4px;"></div>
<div class="b" style="left:1098.0px;top:185.0px;width:380.0px;height:596.5px;background:#f1f5fd;border-radius:5px;"></div>
<div class="t" style="top:205.5px;font-size:16px;line-height:22px;color:#212121;-webkit-text-stroke:0.35px currentColor;letter-spacing:0.256px;left:1114.0px;">Cargo</div>
<div class="t" style="top:207.5px;font-size:13.5px;line-height:19px;color:#333;letter-spacing:0.081px;left:1166.5px;">28170682</div>
<svg class="b" style="left:1237.8px;top:204.8px;" width="22.44" height="22.44" viewBox="0 0 24 24"><path d="M19 19H5V5h7V3H5c-1.11 0-2 .9-2 2v14c0 1.1.89 2 2 2h14c1.1 0 2-.9 2-2v-7h-2v7zM14 3v2h3.59l-9.83 9.83 1.41 1.41L19 6.41V10h2V3h-7z" fill="#616161"/></svg>
<svg class="b" style="left:1447.8px;top:206.1px;" width="21.12" height="21.12" viewBox="0 0 24 24"><path d="M12 8l-6 6 1.41 1.41L12 10.83l4.59 4.58L18 14z" fill="#555"/></svg>
<div class="t" style="top:245.0px;font-size:12.5px;line-height:18px;color:#0f5ee6;letter-spacing:-0.452px;left:1114.0px;">AASIAAT (L)</div>
<svg class="b" style="left:1185.4px;top:244.5px;" width="18.96" height="18.96" viewBox="0 0 24 24"><path d="M12 4l-1.41 1.41L16.17 11H4v2h12.17l-5.58 5.59L12 20l8-8z" fill="#212121"/></svg>
<div class="t" style="top:245.0px;font-size:12.5px;line-height:18px;color:#0f5ee6;letter-spacing:-0.425px;left:1208.5px;">AALST (D)</div>
<svg class="b" style="left:1270.1px;top:242.8px;" width="22.32" height="22.32" viewBox="0 0 24 24"><path d="M19 13h-6v6h-2v-6H5v-2h6V5h2v6h6v2z" fill="#0f5ee6"/></svg>
<div class="t" style="top:276.0px;font-size:11px;line-height:15px;color:#333;letter-spacing:0.034px;left:1114.0px;">Counterpart</div>
<svg class="b" style="left:1177.1px;top:274.2px;" width="17.28" height="17.28" viewBox="0 0 24 24"><path d="M19 19H5V5h7V3H5c-1.11 0-2 .9-2 2v14c0 1.1.89 2 2 2h14c1.1 0 2-.9 2-2v-7h-2v7zM14 3v2h3.59l-9.83 9.83 1.41 1.41L19 6.41V10h2V3h-7z" fill="#666"/></svg>
<div class="b" style="left:1114.0px;top:292.0px;width:347.0px;height:31.5px;background:#fafafa;border:1px solid #b8b8b8;box-sizing:border-box;border-radius:4px;"></div>
<div class="t" style="top:297.8px;font-size:14px;line-height:20px;color:#212121;letter-spacing:-0.119px;left:1121.0px;">Coal Chartering, Charterer, C2020, Chennai</div>
<svg class="b" style="left:1443.5px;top:305.2px;" width="10" height="5" viewBox="0 0 10 5"><path d="M0 0H10L5 5Z" fill="#616161"/></svg>
<div class="t" style="top:332.5px;font-size:11px;line-height:15px;color:#333;letter-spacing:0.022px;left:1114.0px;">Commodity</div>
<div class="b" style="left:1114.0px;top:350.5px;width:347.0px;height:31.0px;background:#fafafa;border:1px solid #b8b8b8;box-sizing:border-box;border-radius:4px;"></div>
<div class="t" style="top:356.0px;font-size:14px;line-height:20px;color:#9a9a9a;letter-spacing:-0.091px;left:1121.0px;">Type to search.</div>
<svg class="b" style="left:1443.5px;top:363.5px;" width="10" height="5" viewBox="0 0 10 5"><path d="M0 0H10L5 5Z" fill="#616161"/></svg>
<div class="t" style="top:390.5px;font-size:11px;line-height:15px;color:#333;letter-spacing:-0.019px;left:1114.0px;">Booked Quantity</div>
<div class="b" style="left:1114.0px;top:408.0px;width:165.0px;height:31.5px;background:#fafafa;border:1px solid #b8b8b8;box-sizing:border-box;border-radius:4px;"></div>
<div class="t" style="top:413.8px;font-size:14px;line-height:20px;color:#212121;letter-spacing:-0.157px;right:1009.0px;">1,000</div>
<div class="t" style="top:390.5px;font-size:11px;line-height:15px;color:#333;letter-spacing:0.034px;left:1296.0px;">Measurement</div>
<div class="b" style="left:1296.0px;top:408.0px;width:165.5px;height:31.5px;background:#fafafa;border:1px solid #b8b8b8;box-sizing:border-box;border-radius:4px;"></div>
<div class="t" style="top:413.8px;font-size:14px;line-height:20px;color:#212121;letter-spacing:-0.644px;left:1303.0px;">MT</div>
<svg class="b" style="left:1444.0px;top:421.2px;" width="10" height="5" viewBox="0 0 10 5"><path d="M0 0H10L5 5Z" fill="#616161"/></svg>
<div class="t" style="top:448.5px;font-size:11px;line-height:15px;color:#333;letter-spacing:-0.027px;left:1114.0px;">Stowage Factor</div>
<div class="b" style="left:1114.0px;top:466.0px;width:165.0px;height:31.5px;background:#fafafa;border:1px solid #b8b8b8;box-sizing:border-box;border-radius:4px;"></div>
<div class="t" style="top:471.8px;font-size:14px;line-height:20px;color:#777;letter-spacing:-0.537px;right:1009.0px;">CBM/MT</div>
<div class="t" style="top:471.8px;font-size:14px;line-height:20px;color:#212121;letter-spacing:-0.157px;right:1065.5px;">1.000</div>
<div class="t" style="top:448.5px;font-size:11px;line-height:15px;color:#333;letter-spacing:-0.011px;left:1296.0px;">Volume</div>
<div class="b" style="left:1296.0px;top:466.0px;width:165.5px;height:31.5px;background:#fafafa;border:1px solid #b8b8b8;box-sizing:border-box;border-radius:4px;"></div>
<div class="t" style="top:471.8px;font-size:14px;line-height:20px;color:#777;letter-spacing:-0.644px;right:826.5px;">CBM</div>
<div class="t" style="top:471.8px;font-size:14px;line-height:20px;color:#212121;letter-spacing:-0.184px;right:860.2px;">1,000.000</div>
<div class="t" style="top:506.5px;font-size:11px;line-height:15px;color:#333;letter-spacing:-0.046px;left:1114.0px;">Freight Rate</div>
<div class="b" style="left:1114.0px;top:524.5px;width:165.0px;height:31.0px;background:#fafafa;border:1px solid #b8b8b8;box-sizing:border-box;border-radius:4px;"></div>
<div class="t" style="top:530.0px;font-size:14px;line-height:20px;color:#777;letter-spacing:-0.644px;right:1009.0px;">EUR</div>
<div class="t" style="top:530.0px;font-size:14px;line-height:20px;color:#212121;letter-spacing:-0.088px;right:1041.1px;">10.0000</div>
<div class="t" style="top:506.5px;font-size:11px;line-height:15px;color:#333;letter-spacing:-0.095px;left:1296.0px;">Rule *</div>
<div class="b" style="left:1296.0px;top:524.5px;width:74.5px;height:31.0px;background:#fafafa;border:1px solid #b8b8b8;box-sizing:border-box;border-radius:4px;"></div>
<div class="t" style="top:530.0px;font-size:14px;line-height:20px;color:#212121;letter-spacing:-0.077px;left:1303.0px;">Rate</div>
<svg class="b" style="left:1353.0px;top:537.5px;" width="10" height="5" viewBox="0 0 10 5"><path d="M0 0H10L5 5Z" fill="#616161"/></svg>
<div class="t" style="top:506.5px;font-size:11px;line-height:15px;color:#333;letter-spacing:0.014px;left:1387.0px;">Currency</div>
<div class="b" style="left:1387.0px;top:524.5px;width:74.5px;height:31.0px;background:#fafafa;border:1px solid #b8b8b8;box-sizing:border-box;border-radius:4px;"></div>
<div class="t" style="top:530.0px;font-size:14px;line-height:20px;color:#212121;letter-spacing:-0.644px;left:1394.0px;">EUR</div>
<svg class="b" style="left:1444.0px;top:537.5px;" width="10" height="5" viewBox="0 0 10 5"><path d="M0 0H10L5 5Z" fill="#616161"/></svg>
<div class="t" style="top:564.5px;font-size:11px;line-height:15px;color:#333;letter-spacing:-0.006px;left:1114.0px;">Broker Commission</div>
<div class="b" style="left:1114.0px;top:582.0px;width:165.0px;height:31.5px;background:#fafafa;border:1px solid #b8b8b8;box-sizing:border-box;border-radius:4px;"></div>
<div class="t" style="top:587.8px;font-size:14px;line-height:20px;color:#777;letter-spacing:0.000px;right:1009.0px;">%</div>
<div class="t" style="top:587.8px;font-size:14px;line-height:20px;color:#212121;letter-spacing:-0.217px;right:1025.9px;">0.00</div>
<div class="t" style="top:564.5px;font-size:11px;line-height:15px;color:#333;letter-spacing:-0.001px;left:1296.0px;">Address Commission</div>
<div class="b" style="left:1296.0px;top:582.0px;width:165.5px;height:31.5px;background:#fafafa;border:1px solid #b8b8b8;box-sizing:border-box;border-radius:4px;"></div>
<div class="t" style="top:587.8px;font-size:14px;line-height:20px;color:#777;letter-spacing:0.000px;right:826.5px;">%</div>
<div class="t" style="top:587.8px;font-size:14px;line-height:20px;color:#212121;letter-spacing:-0.217px;right:843.4px;">0.00</div>
<div class="b" style="left:1114.0px;top:624.0px;width:45.5px;height:18.0px;background:#89b8f8;border-radius:3px;"></div>
<div class="t" style="top:625.0px;font-size:11.5px;line-height:16px;color:#0d1f44;letter-spacing:-0.055px;left:736.8px;width:800px;text-align:center;">Early -0</div>
<div class="t" style="top:650.5px;font-size:11px;line-height:15px;color:#333;letter-spacing:-0.012px;left:1114.0px;">Laydays Commence</div>
<div class="b" style="left:1114.0px;top:668.0px;width:165.0px;height:31.5px;background:#fafafa;border:1px solid #b8b8b8;box-sizing:border-box;border-radius:4px;"></div>
<div class="t" style="top:673.8px;font-size:14px;line-height:20px;color:#212121;letter-spacing:0.030px;left:1121.0px;">31/01/28 00:00</div>
<svg class="b" style="left:1254.4px;top:673.5px;" width="21.12" height="21.12" viewBox="0 0 24 24"><path d="M17 12h-5v5h5v-5zM16 1v2H8V1H6v2H5c-1.11 0-1.99.9-1.99 2L3 19c0 1.1.89 2 2 2h14c1.1 0 2-.9 2-2V5c0-1.1-.9-2-2-2h-1V1h-2zm3 18H5V8h14v11z" fill="#616161"/></svg>
<div class="t" style="top:650.5px;font-size:11px;line-height:15px;color:#333;letter-spacing:-0.001px;left:1296.0px;">Laydays Cancelling</div>
<div class="b" style="left:1296.0px;top:668.0px;width:165.5px;height:31.5px;background:#fafafa;border:1px solid #b8b8b8;box-sizing:border-box;border-radius:4px;"></div>
<div class="t" style="top:673.8px;font-size:14px;line-height:20px;color:#212121;letter-spacing:0.030px;left:1303.0px;">31/01/28 23:59</div>
<svg class="b" style="left:1436.9px;top:673.5px;" width="21.12" height="21.12" viewBox="0 0 24 24"><path d="M17 12h-5v5h5v-5zM16 1v2H8V1H6v2H5c-1.11 0-1.99.9-1.99 2L3 19c0 1.1.89 2 2 2h14c1.1 0 2-.9 2-2V5c0-1.1-.9-2-2-2h-1V1h-2zm3 18H5V8h14v11z" fill="#616161"/></svg>
<div class="b" style="left:1114.0px;top:718.0px;width:347.0px;height:1.0px;background:#cacdd2;"></div>
<div class="t" style="top:727.5px;font-size:12.5px;line-height:18px;color:#333;letter-spacing:-0.022px;left:1114.0px;">Various Revenue</div>
<div class="t" style="top:727.5px;font-size:12.5px;line-height:18px;color:#333;letter-spacing:-0.405px;right:820.0px;">0 USD</div>
<div class="t" style="top:746.5px;font-size:12.5px;line-height:18px;color:#333;letter-spacing:-0.052px;left:1114.0px;">Various Cost</div>
<div class="t" style="top:746.5px;font-size:12.5px;line-height:18px;color:#333;letter-spacing:-0.311px;right:820.0px;">4,000 USD</div>
<div class="b" style="left:1494.0px;top:185.0px;width:379.0px;height:442.0px;background:#f1f5fd;border-radius:5px;"></div>
<div class="b" style="left:1494.0px;top:185.0px;width:379.0px;height:48.0px;background:#e4edfb;border-radius:5px 5px 0 0;"></div>
<div class="b" style="left:1494.0px;top:230.5px;width:189.0px;height:2.5px;background:#0f5ee6;"></div>
<div class="t" style="top:198.0px;font-size:16px;line-height:22px;color:#0f5ee6;-webkit-text-stroke:0.35px currentColor;letter-spacing:0.340px;left:1188.0px;width:800px;text-align:center;">Schedule</div>
<div class="t" style="top:198.0px;font-size:16px;line-height:22px;color:#444;-webkit-text-stroke:0.35px currentColor;letter-spacing:0.234px;left:1378.5px;width:800px;text-align:center;">Edit Schedule</div>
<div class="t" style="top:249.5px;font-size:11px;line-height:15px;color:#333;letter-spacing:-0.066px;left:1510.0px;">Voyage Start Date</div>
<div class="t" style="top:249.0px;font-size:11.5px;line-height:16px;color:#9a9a9a;letter-spacing:-0.063px;left:1285.5px;width:800px;text-align:center;">Lock</div>
<div class="t" style="top:249.5px;font-size:11px;line-height:15px;color:#333;letter-spacing:-0.046px;left:1722.0px;">Waiting Days</div>
<div class="t" style="top:249.0px;font-size:11.5px;line-height:16px;color:#333;letter-spacing:-0.063px;left:1437.0px;width:800px;text-align:center;">Lock</div>
<div class="b" style="left:1510.5px;top:267.0px;width:154.5px;height:31.5px;background:#fafafa;border:1px solid #b8b8b8;box-sizing:border-box;border-radius:4px;"></div>
<div class="t" style="top:272.8px;font-size:14px;line-height:20px;color:#212121;letter-spacing:0.030px;left:1517.5px;">21/01/28 09:55</div>
<svg class="b" style="left:1640.4px;top:272.5px;" width="21.12" height="21.12" viewBox="0 0 24 24"><path d="M17 12h-5v5h5v-5zM16 1v2H8V1H6v2H5c-1.11 0-1.99.9-1.99 2L3 19c0 1.1.89 2 2 2h14c1.1 0 2-.9 2-2V5c0-1.1-.9-2-2-2h-1V1h-2zm3 18H5V8h14v11z" fill="#616161"/></svg>
<div class="b" style="left:1676.5px;top:277.0px;width:17.0px;height:17.0px;background:#b4b8bf;border-radius:2px;"></div>
<svg class="b" style="left:1676.5px;top:277.0px;" width="17" height="17" viewBox="0 0 17 17"><path d="M3.5 8.5L7 12L13.5 5.5" fill="none" stroke="#fff" stroke-width="1.8"/></svg>
<div class="b" style="left:1722.0px;top:267.0px;width:94.5px;height:31.5px;background:#fafafa;border:1px solid #b8b8b8;box-sizing:border-box;border-radius:4px;"></div>
<div class="t" style="top:272.8px;font-size:14px;line-height:20px;color:#212121;letter-spacing:-0.217px;right:471.5px;">0.00</div>
<div class="b" style="left:1828.5px;top:277.0px;width:17.0px;height:17.0px;background:#0a64f0;border-radius:2px;"></div>
<svg class="b" style="left:1828.5px;top:277.0px;" width="17" height="17" viewBox="0 0 17 17"><path d="M3.5 8.5L7 12L13.5 5.5" fill="none" stroke="#fff" stroke-width="1.8"/></svg>
<div class="b" style="left:1682.5px;top:323.0px;width:1.0px;height:198.0px;background:#bdbdbd;"></div>
<div class="b" style="left:1675.0px;top:307.0px;width:16.0px;height:16.0px;background:#bdbdbd;border-radius:8px;"></div>
<div class="t" style="top:307.5px;font-size:11px;line-height:15px;color:#fff;letter-spacing:-0.506px;left:1283.0px;width:800px;text-align:center;">B</div>
<div class="b" style="left:1675.0px;top:394.0px;width:16.0px;height:16.0px;background:#bdbdbd;border-radius:8px;"></div>
<div class="t" style="top:394.5px;font-size:11px;line-height:15px;color:#fff;letter-spacing:0.066px;left:1283.0px;width:800px;text-align:center;">1</div>
<div class="b" style="left:1675.0px;top:520.0px;width:16.0px;height:16.0px;background:#bdbdbd;border-radius:8px;"></div>
<div class="t" style="top:520.5px;font-size:11px;line-height:15px;color:#fff;letter-spacing:0.066px;left:1283.0px;width:800px;text-align:center;">2</div>
<div class="b" style="left:1514.0px;top:311.5px;width:38.0px;height:17.5px;background:#fff;border:1px solid #9e9e9e;box-sizing:border-box;border-radius:9px;"></div>
<div class="t" style="top:312.0px;font-size:11.5px;line-height:16px;color:#444;letter-spacing:-0.529px;left:1133.0px;width:800px;text-align:center;">GMT</div>
<div class="t" style="top:311.0px;font-size:12.5px;line-height:18px;color:#212121;-webkit-text-stroke:0.4px currentColor;letter-spacing:-0.042px;right:616.5px;">21/01/28, 09:55</div>
<div class="t" style="top:311.0px;font-size:12.5px;line-height:18px;color:#212121;-webkit-text-stroke:0.4px currentColor;letter-spacing:-0.750px;left:1702.0px;">TRONDHEIM</div>
<div class="t" style="top:330.0px;font-size:12.5px;line-height:18px;color:#212121;letter-spacing:0.004px;left:1702.0px;">Ballast</div>
<div class="b" style="left:1545.5px;top:372.0px;width:119.0px;height:17.5px;background:#fff;border:1px solid #9e9e9e;box-sizing:border-box;border-radius:9px;"></div>
<div class="t" style="top:372.8px;font-size:11.5px;line-height:16px;color:#444;letter-spacing:-0.149px;left:1205.0px;width:800px;text-align:center;">9.33 d + 0.47 d Extra</div>
<div class="b" style="left:1702.0px;top:372.0px;width:107.5px;height:17.5px;background:#fff;border:1px solid #9e9e9e;box-sizing:border-box;border-radius:9px;"></div>
<div class="t" style="top:372.8px;font-size:11.5px;line-height:16px;color:#444;letter-spacing:-0.132px;left:1355.8px;width:800px;text-align:center;">9.52 kn <span style="color:#bbb">|</span> 2,239 nm</div>
<div class="t" style="top:398.0px;font-size:12.5px;line-height:18px;color:#212121;-webkit-text-stroke:0.4px currentColor;letter-spacing:-0.171px;right:616.5px;">ETA 30/01/28, 23:59</div>
<div class="t" style="top:416.7px;font-size:12.5px;line-height:18px;color:#212121;-webkit-text-stroke:0.4px currentColor;letter-spacing:-0.171px;right:616.5px;">ETD 31/01/28, 17:59</div>
<div class="t" style="top:437.8px;font-size:12.5px;line-height:18px;color:#666;letter-spacing:-0.132px;right:616.5px;">0.75 Extra</div>
<div class="t" style="top:398.0px;font-size:12.5px;line-height:18px;color:#212121;-webkit-text-stroke:0.4px currentColor;letter-spacing:-0.750px;left:1702.0px;">AASIAAT</div>
<div class="t" style="top:416.0px;font-size:12.5px;line-height:18px;color:#212121;letter-spacing:0.004px;left:1702.0px;">Loading</div>
<div class="t" style="top:436.6px;font-size:12.5px;line-height:18px;color:#666;letter-spacing:-0.205px;left:1702.0px;">Port Cost: 1,000 EUR</div>
<div class="t" style="top:454.8px;font-size:12.5px;line-height:18px;color:#666;letter-spacing:-0.123px;left:1702.0px;">Total Days: 0.75</div>
<svg class="b" style="left:1795.2px;top:456.3px;" width="15.0" height="15.0" viewBox="0 0 24 24"><path d="M11 7h2v2h-2zm0 4h2v6h-2zm1-9C6.48 2 2 6.48 2 12s4.48 10 10 10 10-4.48 10-10S17.52 2 12 2zm0 18c-4.41 0-8-3.59-8-8s3.59-8 8-8 8 3.59 8 8-3.59 8-8 8z" fill="#666"/></svg>
<div class="b" style="left:1545.5px;top:498.5px;width:119.0px;height:17.5px;background:#fff;border:1px solid #9e9e9e;box-sizing:border-box;border-radius:9px;"></div>
<div class="t" style="top:499.2px;font-size:11.5px;line-height:16px;color:#444;letter-spacing:-0.149px;left:1205.0px;width:800px;text-align:center;">10.2 d + 0.51 d Extra</div>
<div class="b" style="left:1702.0px;top:498.5px;width:107.5px;height:17.5px;background:#fff;border:1px solid #9e9e9e;box-sizing:border-box;border-radius:9px;"></div>
<div class="t" style="top:499.2px;font-size:11.5px;line-height:16px;color:#444;letter-spacing:-0.132px;left:1355.8px;width:800px;text-align:center;">9.52 kn <span style="color:#bbb">|</span> 2,449 nm</div>
<div class="t" style="top:523.8px;font-size:12.5px;line-height:18px;color:#212121;-webkit-text-stroke:0.4px currentColor;letter-spacing:-0.171px;right:616.5px;">ETA 11/02/28, 16:05</div>
<div class="t" style="top:542.9px;font-size:12.5px;line-height:18px;color:#212121;-webkit-text-stroke:0.4px currentColor;letter-spacing:-0.171px;right:616.5px;">ETD 12/02/28, 10:05</div>
<div class="t" style="top:563.9px;font-size:12.5px;line-height:18px;color:#666;letter-spacing:-0.132px;right:616.5px;">0.75 Extra</div>
<div class="t" style="top:523.8px;font-size:12.5px;line-height:18px;color:#212121;-webkit-text-stroke:0.4px currentColor;letter-spacing:-0.750px;left:1702.0px;">AALST</div>
<div class="t" style="top:542.0px;font-size:12.5px;line-height:18px;color:#212121;letter-spacing:0.039px;left:1702.0px;">Discharging</div>
<div class="t" style="top:562.6px;font-size:12.5px;line-height:18px;color:#666;letter-spacing:-0.208px;left:1702.0px;">Port Cost: 0 USD</div>
<div class="t" style="top:580.8px;font-size:12.5px;line-height:18px;color:#666;letter-spacing:-0.123px;left:1702.0px;">Total Days: 0.75</div>
<svg class="b" style="left:1795.2px;top:582.3px;" width="15.0" height="15.0" viewBox="0 0 24 24"><path d="M11 7h2v2h-2zm0 4h2v6h-2zm1-9C6.48 2 2 6.48 2 12s4.48 10 10 10 10-4.48 10-10S17.52 2 12 2zm0 18c-4.41 0-8-3.59-8-8s3.59-8 8-8 8 3.59 8 8-3.59 8-8 8z" fill="#666"/></svg>
<div class="b" style="left:1889.0px;top:185.0px;width:379.5px;height:819.5px;background:#f1f5fd;border-radius:5px;"></div>
<div class="t" style="top:206.0px;font-size:16.5px;line-height:23px;color:#212121;-webkit-text-stroke:0.35px currentColor;letter-spacing:-0.116px;left:1905.5px;">P&amp;L Summary (USD)</div>
<svg class="b" style="left:2080.3px;top:205.2px;" width="24.0" height="24.0" viewBox="0 0 24 24"><path d="M6 20c1.1 0 2-.9 2-2v-7c0-1.1-.9-2-2-2s-2 .9-2 2v7c0 1.1.9 2 2 2zm10-5v3c0 1.1.9 2 2 2s2-.9 2-2v-3c0-1.1-.9-2-2-2s-2 .9-2 2zm-6 3c0 1.1.9 2 2 2s2-.9 2-2V6c0-1.1-.9-2-2-2s-2 .9-2 2v12z" fill="#6e6e6e"/></svg>
<svg class="b" style="left:2117.3px;top:205.1px;" width="24.0" height="24.0" viewBox="0 0 24 24"><path d="M19.88 18.47c.44-.7.7-1.51.7-2.39 0-2.49-2.010-4.5-4.5-4.5s-4.5 2.01-4.5 4.5 2.01 4.5 4.49 4.5c.88 0 1.7-.26 2.39-.7L21.58 23 23 21.58l-3.12-3.11zm-3.8.11c-1.38 0-2.5-1.12-2.5-2.5s1.12-2.5 2.5-2.5 2.5 1.12 2.5 2.5-1.12 2.5-2.5 2.5zm-.36-8.5c-.74.02-1.45.18-2.1.45l-.55-.83-3.8 6.18-3.01-3.52-3.63 5.81L1 17l5-8 3 3.5L13 6l2.72 4.08zm2.59.5c-.64-.28-1.33-.45-2.05-.49L21.38 2 23 3.18l-4.69 7.4z" fill="#b5b5b5"/></svg>
<svg class="b" style="left:2239.6px;top:207.0px;" width="21.12" height="21.12" viewBox="0 0 24 24"><path d="M12 8l-6 6 1.41 1.41L12 10.83l4.59 4.58L18 14z" fill="#555"/></svg>
<div class="t" style="top:259.9px;font-size:12.5px;line-height:18px;color:#212121;-webkit-text-stroke:0.4px currentColor;letter-spacing:-0.268px;left:1909.5px;">Freight</div>
<div class="t" style="top:259.9px;font-size:12.5px;line-height:18px;color:#212121;-webkit-text-stroke:0.4px currentColor;letter-spacing:-0.104px;right:36.5px;">50,000</div>
<div class="t" style="top:283.7px;font-size:12.5px;line-height:18px;color:#212121;letter-spacing:0.033px;left:1909.5px;">Adjustment</div>
<div class="t" style="top:283.7px;font-size:12.5px;line-height:18px;color:#212121;letter-spacing:0.075px;right:36.5px;">0</div>
<div class="t" style="top:306.9px;font-size:12.5px;line-height:18px;color:#212121;letter-spacing:0.004px;left:1909.5px;">Various</div>
<div class="t" style="top:306.9px;font-size:12.5px;line-height:18px;color:#212121;letter-spacing:0.075px;right:36.5px;">0</div>
<div class="t" style="top:331.0px;font-size:12.5px;line-height:18px;color:#212121;letter-spacing:0.025px;left:1909.5px;">Demurrage</div>
<div class="t" style="top:331.0px;font-size:12.5px;line-height:18px;color:#212121;letter-spacing:0.075px;right:36.5px;">0</div>
<div class="b" style="left:1889.0px;top:351.0px;width:379.5px;height:28.0px;background:#b4ead1;border-top:1px solid #c6c2c2;border-bottom:1px solid #c6c2c2;"></div>
<div class="t" style="top:355.0px;font-size:12.5px;line-height:18px;color:#212121;-webkit-text-stroke:0.4px currentColor;letter-spacing:-0.288px;left:1909.5px;">Gross Revenue</div>
<div class="t" style="top:355.0px;font-size:12.5px;line-height:18px;color:#212121;-webkit-text-stroke:0.4px currentColor;letter-spacing:-0.104px;right:36.5px;">50,000</div>
<div class="t" style="top:381.7px;font-size:12.5px;line-height:18px;color:#212121;letter-spacing:0.033px;left:1909.5px;">Commission</div>
<div class="t" style="top:381.7px;font-size:12.5px;line-height:18px;color:#212121;letter-spacing:0.075px;right:36.5px;">0</div>
<div class="t" style="top:404.6px;font-size:12.5px;line-height:18px;color:#212121;letter-spacing:0.016px;left:1909.5px;">Despatch</div>
<div class="t" style="top:404.6px;font-size:12.5px;line-height:18px;color:#212121;letter-spacing:0.075px;right:36.5px;">0</div>
<div class="b" style="left:1889.0px;top:426.0px;width:379.5px;height:28.0px;background:#b4ead1;border-top:1px solid #c6c2c2;border-bottom:1px solid #c6c2c2;"></div>
<div class="t" style="top:430.0px;font-size:12.5px;line-height:18px;color:#212121;-webkit-text-stroke:0.4px currentColor;letter-spacing:-0.307px;left:1909.5px;">Net Revenue</div>
<div class="t" style="top:430.0px;font-size:12.5px;line-height:18px;color:#212121;-webkit-text-stroke:0.4px currentColor;letter-spacing:-0.104px;right:36.5px;">50,000</div>
<div class="t" style="top:456.7px;font-size:12.5px;line-height:18px;color:#212121;letter-spacing:-0.103px;left:1909.5px;">Port Cost</div>
<div class="t" style="top:456.7px;font-size:12.5px;line-height:18px;color:#212121;letter-spacing:-0.140px;right:36.5px;">5,000</div>
<div class="t" style="top:479.7px;font-size:12.5px;line-height:18px;color:#212121;letter-spacing:-0.082px;left:1909.5px;">Canal Cost</div>
<div class="t" style="top:479.7px;font-size:12.5px;line-height:18px;color:#212121;letter-spacing:0.075px;right:36.5px;">0</div>
<div class="t" style="top:503.7px;font-size:12.5px;line-height:18px;color:#212121;letter-spacing:-0.575px;left:1909.5px;">ILOHC</div>
<div class="t" style="top:503.7px;font-size:12.5px;line-height:18px;color:#212121;letter-spacing:0.075px;right:36.5px;">0</div>
<div class="t" style="top:526.7px;font-size:12.5px;line-height:18px;color:#212121;letter-spacing:-0.040px;left:1909.5px;">Handling Cost</div>
<div class="t" style="top:526.7px;font-size:12.5px;line-height:18px;color:#212121;letter-spacing:0.075px;right:36.5px;">500</div>
<div class="t" style="top:550.7px;font-size:12.5px;line-height:18px;color:#212121;letter-spacing:0.004px;left:1909.5px;">Various</div>
<div class="t" style="top:550.7px;font-size:12.5px;line-height:18px;color:#212121;letter-spacing:-0.104px;right:36.5px;">12,000</div>
<div class="t" style="top:573.7px;font-size:12.5px;line-height:18px;color:#212121;letter-spacing:-0.052px;left:1909.5px;">Freight Cost</div>
<div class="t" style="top:573.7px;font-size:12.5px;line-height:18px;color:#212121;letter-spacing:0.075px;right:36.5px;">0</div>
<div class="b" style="left:1905.0px;top:603.0px;width:348.0px;height:1.0px;background:#cacdd2;"></div>
<div class="t" style="top:608.0px;font-size:11.5px;line-height:16px;color:#333;letter-spacing:-0.190px;right:198.0px;">Price (USD)</div>
<div class="t" style="top:608.0px;font-size:11.5px;line-height:16px;color:#333;letter-spacing:-0.218px;right:117.5px;">Qty (MT)</div>
<div class="t" style="top:608.0px;font-size:11.5px;line-height:16px;color:#333;letter-spacing:-0.218px;right:36.5px;">Cost (USD)</div>
<div class="t" style="top:631.6px;font-size:12.5px;line-height:18px;color:#212121;letter-spacing:-0.575px;left:1911.0px;">FO</div>
<div class="b" style="left:1992.0px;top:626.5px;width:91.5px;height:24.0px;background:#fafafa;border:1px solid #b8b8b8;box-sizing:border-box;border-radius:4px;"></div>
<div class="t" style="top:629.0px;font-size:13.5px;line-height:19px;color:#212121;letter-spacing:-0.209px;right:204.5px;">0.00</div>
<div class="t" style="top:631.6px;font-size:12.5px;line-height:18px;color:#212121;letter-spacing:-0.079px;right:117.5px;">181.039</div>
<div class="t" style="top:631.6px;font-size:12.5px;line-height:18px;color:#212121;letter-spacing:0.075px;right:36.5px;">0</div>
<div class="t" style="top:664.6px;font-size:12.5px;line-height:18px;color:#212121;letter-spacing:-0.542px;left:1911.0px;">LS MGO</div>
<div class="b" style="left:1992.0px;top:659.3px;width:91.5px;height:24.0px;background:#fafafa;border:1px solid #b8b8b8;box-sizing:border-box;border-radius:4px;"></div>
<div class="t" style="top:661.8px;font-size:13.5px;line-height:19px;color:#212121;letter-spacing:-0.209px;right:204.5px;">0.00</div>
<div class="t" style="top:664.6px;font-size:12.5px;line-height:18px;color:#212121;letter-spacing:-0.104px;right:117.5px;">24.029</div>
<div class="t" style="top:664.6px;font-size:12.5px;line-height:18px;color:#212121;letter-spacing:0.075px;right:36.5px;">0</div>
<div class="t" style="top:697.0px;font-size:12.5px;line-height:18px;color:#212121;-webkit-text-stroke:0.4px currentColor;letter-spacing:-0.307px;left:1909.5px;">Bunker Cost</div>
<div class="t" style="top:697.0px;font-size:12.5px;line-height:18px;color:#212121;-webkit-text-stroke:0.4px currentColor;letter-spacing:0.075px;right:36.5px;">0</div>
<div class="b" style="left:1905.0px;top:725.0px;width:348.0px;height:1.0px;background:#cacdd2;"></div>
<div class="t" style="top:738.7px;font-size:12.5px;line-height:18px;color:#212121;letter-spacing:-0.542px;left:1911.5px;">EU ETS</div>
<div class="b" style="left:1992.0px;top:732.3px;width:91.5px;height:24.5px;background:#fafafa;border:1px solid #b8b8b8;box-sizing:border-box;border-radius:4px;"></div>
<div class="t" style="top:735.0px;font-size:13.5px;line-height:19px;color:#777;letter-spacing:-0.621px;right:204.5px;">EUR</div>
<div class="t" style="top:735.0px;font-size:13.5px;line-height:19px;color:#212121;letter-spacing:-0.209px;right:235.6px;">0.00</div>
<div class="t" style="top:738.7px;font-size:12.5px;line-height:18px;color:#212121;letter-spacing:-0.140px;right:117.5px;">0.000</div>
<div class="t" style="top:738.7px;font-size:12.5px;line-height:18px;color:#212121;letter-spacing:0.075px;right:36.5px;">0</div>
<div class="t" style="top:771.7px;font-size:12.5px;line-height:18px;color:#212121;letter-spacing:-0.257px;left:1911.5px;">Fuel EU</div>
<div class="b" style="left:1992.0px;top:765.3px;width:91.5px;height:24.5px;background:#fafafa;border:1px solid #b8b8b8;box-sizing:border-box;border-radius:4px;"></div>
<div class="t" style="top:768.0px;font-size:13.5px;line-height:19px;color:#777;letter-spacing:-0.621px;right:204.5px;">EUR</div>
<div class="t" style="top:768.0px;font-size:13.5px;line-height:19px;color:#212121;letter-spacing:-0.209px;right:235.6px;">0.00</div>
<div class="t" style="top:771.7px;font-size:12.5px;line-height:18px;color:#212121;letter-spacing:-0.140px;right:117.5px;">0.000</div>
<div class="t" style="top:771.7px;font-size:12.5px;line-height:18px;color:#212121;letter-spacing:0.075px;right:36.5px;">0</div>
<div class="b" style="left:1889.0px;top:796.0px;width:379.5px;height:65.0px;background:#b4ead1;border-top:1px solid #c6c2c2;border-bottom:1px solid #c6c2c2;"></div>
<div class="t" style="top:801.2px;font-size:11.5px;line-height:16px;color:#333;letter-spacing:-0.063px;left:1707.0px;width:800px;text-align:center;">Lock</div>
<div class="t" style="top:805.3px;font-size:11.5px;line-height:16px;color:#212121;-webkit-text-stroke:0.4px currentColor;letter-spacing:-0.216px;right:36.5px;">Contribution</div>
<div class="t" style="top:825.6px;font-size:12.5px;line-height:18px;color:#212121;-webkit-text-stroke:0.4px currentColor;letter-spacing:-0.750px;left:1909.0px;">TCE</div>
<div class="b" style="left:1964.5px;top:819.5px;width:122.0px;height:24.5px;background:#fafafa;border:1px solid #b8b8b8;box-sizing:border-box;border-radius:4px;"></div>
<div class="t" style="top:822.2px;font-size:13.5px;line-height:19px;color:#212121;letter-spacing:-0.151px;right:201.5px;">1,477</div>
<div class="b" style="left:2098.5px;top:826.5px;width:17.0px;height:16.5px;border:2px solid #555;box-sizing:border-box;border-radius:2px;"></div>
<div class="t" style="top:825.6px;font-size:12.5px;line-height:18px;color:#212121;-webkit-text-stroke:0.4px currentColor;letter-spacing:-0.104px;right:36.5px;">32,500</div>
<div class="t" style="top:863.8px;font-size:12.5px;line-height:18px;color:#212121;letter-spacing:-0.052px;left:1909.5px;">Hire Payable</div>
<div class="t" style="top:863.8px;font-size:12.5px;line-height:18px;color:#212121;letter-spacing:0.075px;right:36.5px;">0</div>
<div class="t" style="top:887.8px;font-size:12.5px;line-height:18px;color:#212121;letter-spacing:-0.040px;left:1909.5px;">Ballast Bonus</div>
<div class="t" style="top:887.8px;font-size:12.5px;line-height:18px;color:#212121;letter-spacing:0.075px;right:36.5px;">0</div>
<div class="t" style="top:910.9px;font-size:12.5px;line-height:18px;color:#212121;letter-spacing:-0.575px;left:1909.5px;">CVE</div>
<div class="t" style="top:910.9px;font-size:12.5px;line-height:18px;color:#212121;letter-spacing:0.075px;right:36.5px;">0</div>
<div class="b" style="left:1889.0px;top:932.0px;width:379.5px;height:57.0px;background:#b4ead1;border-top:1px solid #c6c2c2;border-bottom:1px solid #c6c2c2;"></div>
<div class="t" style="top:937.3px;font-size:11.5px;line-height:16px;color:#212121;-webkit-text-stroke:0.4px currentColor;letter-spacing:-0.259px;right:36.5px;">Result</div>
<div class="t" style="top:961.0px;font-size:12.5px;line-height:18px;color:#212121;-webkit-text-stroke:0.4px currentColor;letter-spacing:-0.297px;left:1909.0px;">Result / Day</div>
<div class="t" style="top:961.0px;font-size:12.5px;line-height:18px;color:#212121;-webkit-text-stroke:0.4px currentColor;letter-spacing:-0.140px;left:2027.0px;">1,477</div>
<div class="b" style="left:2144.0px;top:955.5px;width:100.5px;height:24.0px;background:#fafafa;border:1px solid #b8b8b8;box-sizing:border-box;border-radius:4px;"></div>
<div class="t" style="top:958.0px;font-size:13.5px;line-height:19px;color:#212121;letter-spacing:-0.113px;right:43.5px;">32,500</div>
<div class="b" style="left:1889.0px;top:1021.0px;width:379.5px;height:187.5px;background:#f1f5fd;border-radius:5px;"></div>
<div class="t" style="top:1032.8px;font-size:16.5px;line-height:23px;color:#212121;-webkit-text-stroke:0.35px currentColor;letter-spacing:0.206px;left:1905.5px;">Risk</div>
<svg class="b" style="left:2239.6px;top:1034.0px;" width="21.12" height="21.12" viewBox="0 0 24 24"><path d="M12 8l-6 6 1.41 1.41L12 10.83l4.59 4.58L18 14z" fill="#555"/></svg>
<div class="t" style="top:1085.7px;font-size:11px;line-height:15px;color:#333;letter-spacing:-0.095px;left:1905.5px;">TC Benchmark</div>
<div class="b" style="left:1905.5px;top:1103.0px;width:165.0px;height:31.5px;background:#fafafa;border:1px solid #b8b8b8;box-sizing:border-box;border-radius:4px;"></div>
<div class="t" style="top:1108.8px;font-size:14px;line-height:20px;color:#777;letter-spacing:0.000px;right:217.5px;">%</div>
<div class="t" style="top:1108.8px;font-size:14px;line-height:20px;color:#212121;letter-spacing:0.084px;right:234.4px;">100</div>
<div class="t" style="top:1085.7px;font-size:11px;line-height:15px;color:#333;letter-spacing:-0.090px;left:2087.0px;">TC Benchmark Index</div>
<div class="b" style="left:2087.0px;top:1103.0px;width:165.5px;height:31.5px;background:#fafafa;border:1px solid #b8b8b8;box-sizing:border-box;border-radius:4px;"></div>
<div class="t" style="top:1108.8px;font-size:14px;line-height:20px;color:#9a9a9a;letter-spacing:-0.091px;left:2094.0px;">Type to search.</div>
<svg class="b" style="left:2235.0px;top:1116.2px;" width="10" height="5" viewBox="0 0 10 5"><path d="M0 0H10L5 5Z" fill="#616161"/></svg>
<div class="t" style="top:1143.7px;font-size:11px;line-height:15px;color:#333;letter-spacing:-0.046px;left:1905.5px;">Market Value</div>
<div class="b" style="left:1905.5px;top:1161.0px;width:165.0px;height:31.5px;background:#fafafa;border:1px solid #b8b8b8;box-sizing:border-box;border-radius:4px;"></div>
<div class="t" style="top:1166.8px;font-size:14px;line-height:20px;color:#777;letter-spacing:-0.644px;right:217.5px;">USD</div>
<div class="t" style="top:1166.8px;font-size:14px;line-height:20px;color:#212121;letter-spacing:-0.217px;right:249.6px;">0.00</div>
<div class="b" style="left:1722.4px;top:1266.2px;width:554.3px;height:23.5px;background:#f3f3f3;border-radius:4px;"></div>
<svg class="b" style="left:2273.0px;top:1287.0px;" width="8" height="5" viewBox="0 0 8 5"><path d="M0 5L8 0V5Z" fill="#111"/></svg>
<div class="t" style="top:1269.0px;font-size:12.5px;line-height:18px;color:#222;letter-spacing:-0.045px;left:1738.0px;">Created by <span style="-webkit-text-stroke:0.35px currentColor">Sverre Hassel</span> 22/10/2025, 15:48</div>
<div class="t" style="top:1269.0px;font-size:12.5px;line-height:18px;color:#222;letter-spacing:-0.042px;right:20.5px;">Modified by <span style="-webkit-text-stroke:0.35px currentColor">Sverre Hassel</span> 22/10/2025, 15:53</div>
<svg class="b" style="left:1098.0px;top:798.0px;border-radius:5px;overflow:hidden;" width="380" height="240" viewBox="0 0 380 240"><rect width="380" height="240" fill="#d5e7eb"/><polygon points="183.1,0.0 178.6,4.6 170.6,12.5 166.0,19.3 155.8,22.8 144.4,27.3 137.6,29.6 130.8,24.5 129.6,31.9 123.9,38.7 120.5,48.9 112.6,55.8 110.3,54.0 102.3,63.7 97.8,54.6 94.3,64.9 86.4,67.1 80.7,72.8 84.1,79.7 79.6,88.8 76.1,97.9 71.6,104.7 72.7,113.8 69.3,125.2 68.2,135.4 62.5,133.1 59.1,128.6 52.2,122.9 42.0,126.3 37.0,129.0 33.0,118.0 26.0,100.0 18.0,86.0 14.0,70.0 9.0,50.0 8.0,25.0 16.0,8.0 20.0,0.0" fill="#f9f7f2" stroke="#bcd5dd" stroke-width="1.1"/><polygon points="175.5,66.6 179.8,58.5 184.9,54.7 190.8,61.0 194.2,67.9 199.4,59.8 203.2,63.2 206.6,58.1 210.0,63.2 216.0,58.5 221.9,53.4 225.7,57.6 229.6,55.1 228.7,61.0 231.7,66.6 236.0,68.3 235.1,76.8 230.0,81.1 220.2,87.4 211.7,93.0 203.2,93.8 194.7,89.6 184.9,88.7 191.7,83.2 189.1,80.2 187.0,74.7 178.1,76.4 184.9,73.4 190.0,69.1 181.9,67.4" fill="#f9f7f2" stroke="#bcd5dd" stroke-width="1.1"/><polygon points="380.0,92.0 363.3,94.4 355.9,98.1 349.7,106.8 343.5,114.2 341.0,131.5 346.0,140.2 343.5,147.7 350.9,156.3 358.3,156.3 367.0,147.7 370.7,141.5 376.0,137.0 378.0,160.0 376.0,200.0 380.0,220.0" fill="#f9f7f2" stroke="#bcd5dd" stroke-width="1.1"/><polygon points="365.0,172.0 372.0,162.0 377.0,166.0 376.0,178.0 380.0,180.0 380.0,240.0 331.0,240.0 334.0,226.0 340.0,219.0 350.0,208.0 360.0,203.0 366.0,196.0 364.0,186.0" fill="#f9f7f2" stroke="#bcd5dd" stroke-width="1.1"/><polygon points="285.3,155.1 290.2,152.6 296.4,158.8 301.4,165.0 298.9,171.2 307.6,184.8 316.2,196.0 321.2,205.9 322.4,213.3 318.7,220.7 311.3,223.2 301.4,226.9 290.2,229.4 286.5,224.5 296.4,215.8 289.0,209.6 290.2,202.2 284.0,193.5 281.5,184.8 279.1,174.9 281.5,167.5 280.3,160.0" fill="#f9f7f2" stroke="#bcd5dd" stroke-width="1.1"/><polygon points="259.3,198.4 269.2,189.8 274.1,191.0 280.3,200.9 279.1,210.8 269.2,219.5 256.8,222.0 253.1,213.3 256.8,205.9" fill="#f9f7f2" stroke="#bcd5dd" stroke-width="1.1"/><path d="M290.8 111.7H380 M290.8 111.7V147.7 L290.2 152.6 L285.3 176.1 L296.4 191 L305.1 207.1 L313.8 218.3 L301.4 225.7 L288 232" fill="none" stroke="#5a9fc4" stroke-width="1.6" stroke-dasharray="5 4"/><path d="M0 153 Q22 175 30 205 T39 240" fill="none" stroke="#5a9fc4" stroke-width="1.6" stroke-dasharray="5 4"/><text x="187.4" y="77.9" font-family="Liberation Sans" font-size="9.5" letter-spacing="1.0" fill-opacity="1" stroke-opacity="1" fill="#fbfaf6" stroke="#fbfaf6" stroke-width="2.4">ICELAND</text><text x="187.4" y="77.9" font-family="Liberation Sans" font-size="9.5" letter-spacing="1.0" fill-opacity="1" stroke-opacity="1" fill="#55688a" stroke="#55688a" stroke-width="0.35">ICELAND</text><text x="273.5" y="189.1" font-family="Liberation Sans" font-size="9.5" letter-spacing="1.0" fill-opacity="1" stroke-opacity="1" fill="#fbfaf6" stroke="#fbfaf6" stroke-width="2.4">UNITED</text><text x="273.5" y="189.1" font-family="Liberation Sans" font-size="9.5" letter-spacing="1.0" fill-opacity="1" stroke-opacity="1" fill="#55688a" stroke="#55688a" stroke-width="0.35">UNITED</text><text x="266.7" y="200.9" font-family="Liberation Sans" font-size="9.5" letter-spacing="1.0" fill-opacity="1" stroke-opacity="1" fill="#fbfaf6" stroke="#fbfaf6" stroke-width="2.4">KINGDOM</text><text x="266.7" y="200.9" font-family="Liberation Sans" font-size="9.5" letter-spacing="1.0" fill-opacity="1" stroke-opacity="1" fill="#55688a" stroke="#55688a" stroke-width="0.35">KINGDOM</text><text x="245" y="212.1" font-family="Liberation Sans" font-size="9.5" letter-spacing="1.0" fill-opacity="1" stroke-opacity="1" fill="#fbfaf6" stroke="#fbfaf6" stroke-width="2.4">IRELAND</text><text x="245" y="212.1" font-family="Liberation Sans" font-size="9.5" letter-spacing="1.0" fill-opacity="1" stroke-opacity="1" fill="#55688a" stroke="#55688a" stroke-width="0.35">IRELAND</text><text x="339.8" y="126" font-family="Liberation Sans" font-size="9.5" letter-spacing="1.0" fill-opacity="1" stroke-opacity="1" fill="#fbfaf6" stroke="#fbfaf6" stroke-width="2.4">NORWAY</text><text x="339.8" y="126" font-family="Liberation Sans" font-size="9.5" letter-spacing="1.0" fill-opacity="1" stroke-opacity="1" fill="#55688a" stroke="#55688a" stroke-width="0.35">NORWAY</text><text x="372.6" y="142.7" font-family="Liberation Sans" font-size="9.5" letter-spacing="1.0" fill-opacity="1" stroke-opacity="1" fill="#fbfaf6" stroke="#fbfaf6" stroke-width="2.4">SWEDEN</text><text x="372.6" y="142.7" font-family="Liberation Sans" font-size="9.5" letter-spacing="1.0" fill-opacity="1" stroke-opacity="1" fill="#55688a" stroke="#55688a" stroke-width="0.35">SWEDEN</text><text x="344.7" y="184.8" font-family="Liberation Sans" font-size="9.5" letter-spacing="1.0" fill-opacity="1" stroke-opacity="1" fill="#fbfaf6" stroke="#fbfaf6" stroke-width="2.4">DENMARK</text><text x="344.7" y="184.8" font-family="Liberation Sans" font-size="9.5" letter-spacing="1.0" fill-opacity="1" stroke-opacity="1" fill="#55688a" stroke="#55688a" stroke-width="0.35">DENMARK</text><text x="313.8" y="230.6" font-family="Liberation Sans" font-size="9.5" letter-spacing="1.0" fill-opacity="0.5" stroke-opacity="0.5" fill="#fbfaf6" stroke="#fbfaf6" stroke-width="2.4">BELGIUM</text><text x="313.8" y="230.6" font-family="Liberation Sans" font-size="9.5" letter-spacing="1.0" fill-opacity="0.5" stroke-opacity="0.5" fill="#55688a" stroke="#55688a" stroke-width="0.35">BELGIUM</text><polyline points="12.0,13.0 6.5,21.7 6.0,50.0 17.0,84.0 37.8,129.8 62.4,141.2 279.1,142.7 297.7,151.4 342.6,220.0" fill="none" stroke="#f2b12e" stroke-width="2.6" stroke-linejoin="round"/><polyline points="62.4,141.2 196.0,99.3 363.3,91.5 372.6,93.9" fill="none" stroke="#f2b12e" stroke-width="2.6" stroke-linejoin="round"/><path d="M3.0 5 A9.5 9.5 0 1 1 22.0 5 Q21.5 11 12.5 20 Q3.5 11 3.0 5Z" fill="#474747"/><text x="12.5" y="9" font-size="11" fill="#eee" text-anchor="middle" font-family="Liberation Sans">1</text><path d="M362.8 79.5 A9.5 9.5 0 1 1 381.8 79.5 Q381.3 85.5 372.3 94.5 Q363.3 85.5 362.8 79.5Z" fill="#474747"/><text x="372.3" y="83.5" font-size="11" fill="#eee" text-anchor="middle" font-family="Liberation Sans">B</text><path d="M333.1 205 A9.5 9.5 0 1 1 352.1 205 Q351.6 211 342.6 220 Q333.6 211 333.1 205Z" fill="#474747"/><text x="342.6" y="209" font-size="11" fill="#eee" text-anchor="middle" font-family="Liberation Sans">2</text><rect x="11" y="10.5" width="32.3" height="62.5" rx="3" fill="#fff" stroke="#bdbdbd" stroke-width="2"/><rect x="12" y="41.3" width="30.3" height="1" fill="#ccc"/><path d="M27.2 22V34M21.2 28H33.2" stroke="#111" stroke-width="2.2"/><path d="M21.2 58.5H33.2" stroke="#111" stroke-width="2.2"/><rect x="11" y="84.6" width="32.3" height="32.6" rx="3" fill="#fff" stroke="#bdbdbd" stroke-width="2"/><path d="M20.5 98.5V93.5H25.5 M29 93.5H34V98.5 M34 102V107H29 M25.5 107H20.5V102" fill="none" stroke="#222" stroke-width="1.9"/><rect x="218" y="225.7" width="162" height="14.3" fill="#fff" fill-opacity="0.8"/><text x="222" y="235.6" font-size="9.3" font-family="Liberation Sans" fill="#0078a8" letter-spacing="-0.1">Leaflet <tspan fill="#999">|</tspan> <tspan fill="#555">©</tspan> OpenStreetMap<tspan fill="#555">©</tspan> CARTO</text></svg></body></html>
